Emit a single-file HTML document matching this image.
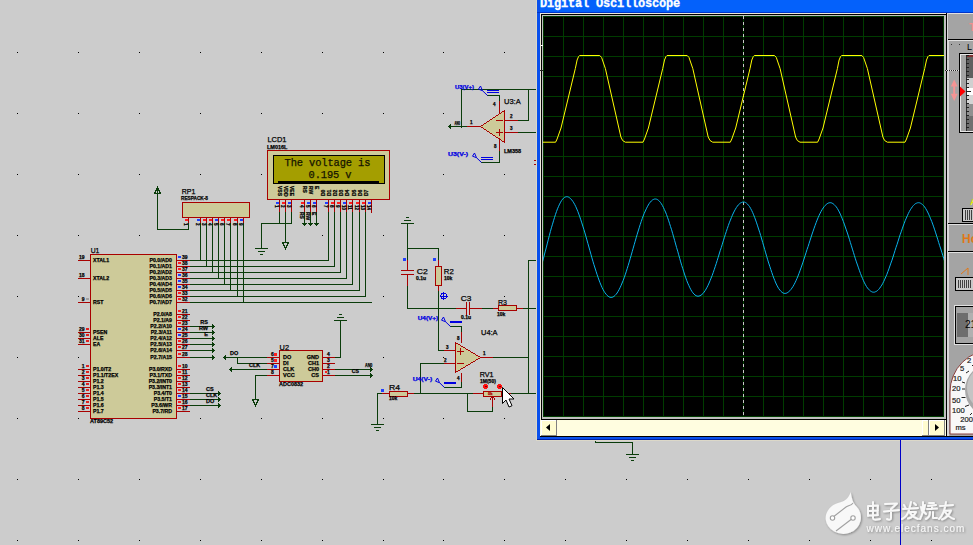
<!DOCTYPE html>
<html><head><meta charset="utf-8"><style>
html,body{margin:0;padding:0;background:#cccccc;width:973px;height:545px;overflow:hidden}
svg{display:block}
</style></head><body>
<svg width="973" height="545" viewBox="0 0 973 545">
<rect width="973" height="545" fill="#cccccc"/>
<g shape-rendering="crispEdges">
<rect x="17" y="52" width="1" height="1" fill="#000"/>
<rect x="17" y="113" width="1" height="1" fill="#000"/>
<rect x="17" y="174" width="1" height="1" fill="#000"/>
<rect x="17" y="235" width="1" height="1" fill="#000"/>
<rect x="17" y="296" width="1" height="1" fill="#000"/>
<rect x="17" y="357" width="1" height="1" fill="#000"/>
<rect x="17" y="418" width="1" height="1" fill="#000"/>
<rect x="17" y="479" width="1" height="1" fill="#000"/>
<rect x="17" y="540" width="1" height="1" fill="#000"/>
<rect x="78" y="52" width="1" height="1" fill="#000"/>
<rect x="78" y="113" width="1" height="1" fill="#000"/>
<rect x="78" y="174" width="1" height="1" fill="#000"/>
<rect x="78" y="235" width="1" height="1" fill="#000"/>
<rect x="78" y="296" width="1" height="1" fill="#000"/>
<rect x="78" y="357" width="1" height="1" fill="#000"/>
<rect x="78" y="418" width="1" height="1" fill="#000"/>
<rect x="78" y="479" width="1" height="1" fill="#000"/>
<rect x="78" y="540" width="1" height="1" fill="#000"/>
<rect x="139" y="52" width="1" height="1" fill="#000"/>
<rect x="139" y="113" width="1" height="1" fill="#000"/>
<rect x="139" y="174" width="1" height="1" fill="#000"/>
<rect x="139" y="235" width="1" height="1" fill="#000"/>
<rect x="139" y="296" width="1" height="1" fill="#000"/>
<rect x="139" y="357" width="1" height="1" fill="#000"/>
<rect x="139" y="418" width="1" height="1" fill="#000"/>
<rect x="139" y="479" width="1" height="1" fill="#000"/>
<rect x="139" y="540" width="1" height="1" fill="#000"/>
<rect x="200" y="52" width="1" height="1" fill="#000"/>
<rect x="200" y="113" width="1" height="1" fill="#000"/>
<rect x="200" y="174" width="1" height="1" fill="#000"/>
<rect x="200" y="235" width="1" height="1" fill="#000"/>
<rect x="200" y="296" width="1" height="1" fill="#000"/>
<rect x="200" y="357" width="1" height="1" fill="#000"/>
<rect x="200" y="418" width="1" height="1" fill="#000"/>
<rect x="200" y="479" width="1" height="1" fill="#000"/>
<rect x="200" y="540" width="1" height="1" fill="#000"/>
<rect x="261" y="52" width="1" height="1" fill="#000"/>
<rect x="261" y="113" width="1" height="1" fill="#000"/>
<rect x="261" y="174" width="1" height="1" fill="#000"/>
<rect x="261" y="235" width="1" height="1" fill="#000"/>
<rect x="261" y="296" width="1" height="1" fill="#000"/>
<rect x="261" y="357" width="1" height="1" fill="#000"/>
<rect x="261" y="418" width="1" height="1" fill="#000"/>
<rect x="261" y="479" width="1" height="1" fill="#000"/>
<rect x="261" y="540" width="1" height="1" fill="#000"/>
<rect x="322" y="52" width="1" height="1" fill="#000"/>
<rect x="322" y="113" width="1" height="1" fill="#000"/>
<rect x="322" y="174" width="1" height="1" fill="#000"/>
<rect x="322" y="235" width="1" height="1" fill="#000"/>
<rect x="322" y="296" width="1" height="1" fill="#000"/>
<rect x="322" y="357" width="1" height="1" fill="#000"/>
<rect x="322" y="418" width="1" height="1" fill="#000"/>
<rect x="322" y="479" width="1" height="1" fill="#000"/>
<rect x="322" y="540" width="1" height="1" fill="#000"/>
<rect x="383" y="52" width="1" height="1" fill="#000"/>
<rect x="383" y="113" width="1" height="1" fill="#000"/>
<rect x="383" y="174" width="1" height="1" fill="#000"/>
<rect x="383" y="235" width="1" height="1" fill="#000"/>
<rect x="383" y="296" width="1" height="1" fill="#000"/>
<rect x="383" y="357" width="1" height="1" fill="#000"/>
<rect x="383" y="418" width="1" height="1" fill="#000"/>
<rect x="383" y="479" width="1" height="1" fill="#000"/>
<rect x="383" y="540" width="1" height="1" fill="#000"/>
<rect x="443" y="52" width="1" height="1" fill="#000"/>
<rect x="443" y="113" width="1" height="1" fill="#000"/>
<rect x="443" y="174" width="1" height="1" fill="#000"/>
<rect x="443" y="235" width="1" height="1" fill="#000"/>
<rect x="443" y="296" width="1" height="1" fill="#000"/>
<rect x="443" y="357" width="1" height="1" fill="#000"/>
<rect x="443" y="418" width="1" height="1" fill="#000"/>
<rect x="443" y="479" width="1" height="1" fill="#000"/>
<rect x="443" y="540" width="1" height="1" fill="#000"/>
<rect x="504" y="52" width="1" height="1" fill="#000"/>
<rect x="504" y="113" width="1" height="1" fill="#000"/>
<rect x="504" y="174" width="1" height="1" fill="#000"/>
<rect x="504" y="235" width="1" height="1" fill="#000"/>
<rect x="504" y="296" width="1" height="1" fill="#000"/>
<rect x="504" y="357" width="1" height="1" fill="#000"/>
<rect x="504" y="418" width="1" height="1" fill="#000"/>
<rect x="504" y="479" width="1" height="1" fill="#000"/>
<rect x="504" y="540" width="1" height="1" fill="#000"/>
<rect x="565" y="52" width="1" height="1" fill="#000"/>
<rect x="565" y="113" width="1" height="1" fill="#000"/>
<rect x="565" y="174" width="1" height="1" fill="#000"/>
<rect x="565" y="235" width="1" height="1" fill="#000"/>
<rect x="565" y="296" width="1" height="1" fill="#000"/>
<rect x="565" y="357" width="1" height="1" fill="#000"/>
<rect x="565" y="418" width="1" height="1" fill="#000"/>
<rect x="565" y="479" width="1" height="1" fill="#000"/>
<rect x="565" y="540" width="1" height="1" fill="#000"/>
<rect x="626" y="52" width="1" height="1" fill="#000"/>
<rect x="626" y="113" width="1" height="1" fill="#000"/>
<rect x="626" y="174" width="1" height="1" fill="#000"/>
<rect x="626" y="235" width="1" height="1" fill="#000"/>
<rect x="626" y="296" width="1" height="1" fill="#000"/>
<rect x="626" y="357" width="1" height="1" fill="#000"/>
<rect x="626" y="418" width="1" height="1" fill="#000"/>
<rect x="626" y="479" width="1" height="1" fill="#000"/>
<rect x="626" y="540" width="1" height="1" fill="#000"/>
<rect x="687" y="52" width="1" height="1" fill="#000"/>
<rect x="687" y="113" width="1" height="1" fill="#000"/>
<rect x="687" y="174" width="1" height="1" fill="#000"/>
<rect x="687" y="235" width="1" height="1" fill="#000"/>
<rect x="687" y="296" width="1" height="1" fill="#000"/>
<rect x="687" y="357" width="1" height="1" fill="#000"/>
<rect x="687" y="418" width="1" height="1" fill="#000"/>
<rect x="687" y="479" width="1" height="1" fill="#000"/>
<rect x="687" y="540" width="1" height="1" fill="#000"/>
<rect x="748" y="52" width="1" height="1" fill="#000"/>
<rect x="748" y="113" width="1" height="1" fill="#000"/>
<rect x="748" y="174" width="1" height="1" fill="#000"/>
<rect x="748" y="235" width="1" height="1" fill="#000"/>
<rect x="748" y="296" width="1" height="1" fill="#000"/>
<rect x="748" y="357" width="1" height="1" fill="#000"/>
<rect x="748" y="418" width="1" height="1" fill="#000"/>
<rect x="748" y="479" width="1" height="1" fill="#000"/>
<rect x="748" y="540" width="1" height="1" fill="#000"/>
<rect x="809" y="52" width="1" height="1" fill="#000"/>
<rect x="809" y="113" width="1" height="1" fill="#000"/>
<rect x="809" y="174" width="1" height="1" fill="#000"/>
<rect x="809" y="235" width="1" height="1" fill="#000"/>
<rect x="809" y="296" width="1" height="1" fill="#000"/>
<rect x="809" y="357" width="1" height="1" fill="#000"/>
<rect x="809" y="418" width="1" height="1" fill="#000"/>
<rect x="809" y="479" width="1" height="1" fill="#000"/>
<rect x="809" y="540" width="1" height="1" fill="#000"/>
<rect x="870" y="52" width="1" height="1" fill="#000"/>
<rect x="870" y="113" width="1" height="1" fill="#000"/>
<rect x="870" y="174" width="1" height="1" fill="#000"/>
<rect x="870" y="235" width="1" height="1" fill="#000"/>
<rect x="870" y="296" width="1" height="1" fill="#000"/>
<rect x="870" y="357" width="1" height="1" fill="#000"/>
<rect x="870" y="418" width="1" height="1" fill="#000"/>
<rect x="870" y="479" width="1" height="1" fill="#000"/>
<rect x="870" y="540" width="1" height="1" fill="#000"/>
<rect x="931" y="52" width="1" height="1" fill="#000"/>
<rect x="931" y="113" width="1" height="1" fill="#000"/>
<rect x="931" y="174" width="1" height="1" fill="#000"/>
<rect x="931" y="235" width="1" height="1" fill="#000"/>
<rect x="931" y="296" width="1" height="1" fill="#000"/>
<rect x="931" y="357" width="1" height="1" fill="#000"/>
<rect x="931" y="418" width="1" height="1" fill="#000"/>
<rect x="931" y="479" width="1" height="1" fill="#000"/>
<rect x="931" y="540" width="1" height="1" fill="#000"/>
<rect x="90" y="254" width="87" height="165" fill="#a80000"/>
<rect x="91" y="255" width="85" height="163" fill="#cdca99"/>
<text x="90.7" y="252.5" font-family="Liberation Sans" font-size="7.8" fill="#000" stroke="#000" stroke-width="0.25" text-anchor="start" font-weight="normal" textLength="8.7" lengthAdjust="spacingAndGlyphs">U1</text>
<text x="90" y="422.5" font-family="Liberation Sans" font-size="5.5" fill="#000" stroke="#000" stroke-width="0.25" text-anchor="start" font-weight="bold" >AT89C52</text>
<rect x="78" y="260" width="12" height="1" fill="#a80000"/>
<text x="93" y="262" font-family="Liberation Sans" font-size="5.2" fill="#000" stroke="#000" stroke-width="0.25" text-anchor="start" font-weight="bold" >XTAL1</text>
<text x="84.5" y="259" font-family="Liberation Sans" font-size="5" fill="#000" stroke="#000" stroke-width="0.25" text-anchor="end" font-weight="bold" >19</text>
<rect x="86" y="256" width="3" height="2" fill="#cccccc"/>
<rect x="78" y="278" width="12" height="1" fill="#a80000"/>
<text x="93" y="280" font-family="Liberation Sans" font-size="5.2" fill="#000" stroke="#000" stroke-width="0.25" text-anchor="start" font-weight="bold" >XTAL2</text>
<text x="84.5" y="277" font-family="Liberation Sans" font-size="5" fill="#000" stroke="#000" stroke-width="0.25" text-anchor="end" font-weight="bold" >18</text>
<rect x="86" y="274" width="3" height="2" fill="#cccccc"/>
<rect x="78" y="302" width="12" height="1" fill="#a80000"/>
<text x="93" y="304" font-family="Liberation Sans" font-size="5.2" fill="#000" stroke="#000" stroke-width="0.25" text-anchor="start" font-weight="bold" >RST</text>
<text x="84.5" y="301" font-family="Liberation Sans" font-size="5" fill="#000" stroke="#000" stroke-width="0.25" text-anchor="end" font-weight="bold" >9</text>
<rect x="86" y="298" width="3" height="2" fill="#a0a0a0"/>
<rect x="78" y="332" width="12" height="1" fill="#a80000"/>
<text x="93" y="334" font-family="Liberation Sans" font-size="5.2" fill="#000" stroke="#000" stroke-width="0.25" text-anchor="start" font-weight="bold" >PSEN</text>
<text x="84.5" y="331" font-family="Liberation Sans" font-size="5" fill="#000" stroke="#000" stroke-width="0.25" text-anchor="end" font-weight="bold" >29</text>
<rect x="86" y="328" width="3" height="2" fill="#e02020"/>
<rect x="78" y="338" width="12" height="1" fill="#a80000"/>
<text x="93" y="340" font-family="Liberation Sans" font-size="5.2" fill="#000" stroke="#000" stroke-width="0.25" text-anchor="start" font-weight="bold" >ALE</text>
<text x="84.5" y="337" font-family="Liberation Sans" font-size="5" fill="#000" stroke="#000" stroke-width="0.25" text-anchor="end" font-weight="bold" >30</text>
<rect x="86" y="334" width="3" height="2" fill="#e02020"/>
<rect x="78" y="344" width="12" height="1" fill="#a80000"/>
<text x="93" y="346" font-family="Liberation Sans" font-size="5.2" fill="#000" stroke="#000" stroke-width="0.25" text-anchor="start" font-weight="bold" >EA</text>
<text x="84.5" y="343" font-family="Liberation Sans" font-size="5" fill="#000" stroke="#000" stroke-width="0.25" text-anchor="end" font-weight="bold" >31</text>
<rect x="86" y="340" width="3" height="2" fill="#e02020"/>
<rect x="78" y="369" width="12" height="1" fill="#a80000"/>
<text x="93" y="371" font-family="Liberation Sans" font-size="5.2" fill="#000" stroke="#000" stroke-width="0.25" text-anchor="start" font-weight="bold" >P1.0/T2</text>
<text x="84.5" y="368" font-family="Liberation Sans" font-size="5" fill="#000" stroke="#000" stroke-width="0.25" text-anchor="end" font-weight="bold" >1</text>
<rect x="86" y="365" width="3" height="2" fill="#e02020"/>
<rect x="78" y="375" width="12" height="1" fill="#a80000"/>
<text x="93" y="377" font-family="Liberation Sans" font-size="5.2" fill="#000" stroke="#000" stroke-width="0.25" text-anchor="start" font-weight="bold" >P1.1/T2EX</text>
<text x="84.5" y="374" font-family="Liberation Sans" font-size="5" fill="#000" stroke="#000" stroke-width="0.25" text-anchor="end" font-weight="bold" >2</text>
<rect x="86" y="371" width="3" height="2" fill="#e02020"/>
<rect x="78" y="381" width="12" height="1" fill="#a80000"/>
<text x="93" y="383" font-family="Liberation Sans" font-size="5.2" fill="#000" stroke="#000" stroke-width="0.25" text-anchor="start" font-weight="bold" >P1.2</text>
<text x="84.5" y="380" font-family="Liberation Sans" font-size="5" fill="#000" stroke="#000" stroke-width="0.25" text-anchor="end" font-weight="bold" >3</text>
<rect x="86" y="377" width="3" height="2" fill="#e02020"/>
<rect x="78" y="387" width="12" height="1" fill="#a80000"/>
<text x="93" y="389" font-family="Liberation Sans" font-size="5.2" fill="#000" stroke="#000" stroke-width="0.25" text-anchor="start" font-weight="bold" >P1.3</text>
<text x="84.5" y="386" font-family="Liberation Sans" font-size="5" fill="#000" stroke="#000" stroke-width="0.25" text-anchor="end" font-weight="bold" >4</text>
<rect x="86" y="383" width="3" height="2" fill="#e02020"/>
<rect x="78" y="393" width="12" height="1" fill="#a80000"/>
<text x="93" y="395" font-family="Liberation Sans" font-size="5.2" fill="#000" stroke="#000" stroke-width="0.25" text-anchor="start" font-weight="bold" >P1.4</text>
<text x="84.5" y="392" font-family="Liberation Sans" font-size="5" fill="#000" stroke="#000" stroke-width="0.25" text-anchor="end" font-weight="bold" >5</text>
<rect x="86" y="389" width="3" height="2" fill="#e02020"/>
<rect x="78" y="399" width="12" height="1" fill="#a80000"/>
<text x="93" y="401" font-family="Liberation Sans" font-size="5.2" fill="#000" stroke="#000" stroke-width="0.25" text-anchor="start" font-weight="bold" >P1.5</text>
<text x="84.5" y="398" font-family="Liberation Sans" font-size="5" fill="#000" stroke="#000" stroke-width="0.25" text-anchor="end" font-weight="bold" >6</text>
<rect x="86" y="395" width="3" height="2" fill="#e02020"/>
<rect x="78" y="405" width="12" height="1" fill="#a80000"/>
<text x="93" y="407" font-family="Liberation Sans" font-size="5.2" fill="#000" stroke="#000" stroke-width="0.25" text-anchor="start" font-weight="bold" >P1.6</text>
<text x="84.5" y="404" font-family="Liberation Sans" font-size="5" fill="#000" stroke="#000" stroke-width="0.25" text-anchor="end" font-weight="bold" >7</text>
<rect x="86" y="401" width="3" height="2" fill="#e02020"/>
<rect x="78" y="411" width="12" height="1" fill="#a80000"/>
<text x="93" y="413" font-family="Liberation Sans" font-size="5.2" fill="#000" stroke="#000" stroke-width="0.25" text-anchor="start" font-weight="bold" >P1.7</text>
<text x="84.5" y="410" font-family="Liberation Sans" font-size="5" fill="#000" stroke="#000" stroke-width="0.25" text-anchor="end" font-weight="bold" >8</text>
<rect x="86" y="407" width="3" height="2" fill="#e02020"/>
<rect x="177" y="260" width="13" height="1" fill="#a80000"/>
<text x="172" y="262" font-family="Liberation Sans" font-size="5.2" fill="#000" stroke="#000" stroke-width="0.25" text-anchor="end" font-weight="bold" >P0.0/AD0</text>
<text x="182" y="259" font-family="Liberation Sans" font-size="5" fill="#000" stroke="#000" stroke-width="0.25" text-anchor="start" font-weight="bold" >39</text>
<rect x="178" y="256" width="3" height="2" fill="#2040ff"/>
<rect x="177" y="266" width="13" height="1" fill="#a80000"/>
<text x="172" y="268" font-family="Liberation Sans" font-size="5.2" fill="#000" stroke="#000" stroke-width="0.25" text-anchor="end" font-weight="bold" >P0.1/AD1</text>
<text x="182" y="265" font-family="Liberation Sans" font-size="5" fill="#000" stroke="#000" stroke-width="0.25" text-anchor="start" font-weight="bold" >38</text>
<rect x="178" y="262" width="3" height="2" fill="#ff2020"/>
<rect x="177" y="272" width="13" height="1" fill="#a80000"/>
<text x="172" y="274" font-family="Liberation Sans" font-size="5.2" fill="#000" stroke="#000" stroke-width="0.25" text-anchor="end" font-weight="bold" >P0.2/AD2</text>
<text x="182" y="271" font-family="Liberation Sans" font-size="5" fill="#000" stroke="#000" stroke-width="0.25" text-anchor="start" font-weight="bold" >37</text>
<rect x="178" y="268" width="3" height="2" fill="#ff2020"/>
<rect x="177" y="278" width="13" height="1" fill="#a80000"/>
<text x="172" y="280" font-family="Liberation Sans" font-size="5.2" fill="#000" stroke="#000" stroke-width="0.25" text-anchor="end" font-weight="bold" >P0.3/AD3</text>
<text x="182" y="277" font-family="Liberation Sans" font-size="5" fill="#000" stroke="#000" stroke-width="0.25" text-anchor="start" font-weight="bold" >36</text>
<rect x="178" y="274" width="3" height="2" fill="#2040ff"/>
<rect x="177" y="284" width="13" height="1" fill="#a80000"/>
<text x="172" y="286" font-family="Liberation Sans" font-size="5.2" fill="#000" stroke="#000" stroke-width="0.25" text-anchor="end" font-weight="bold" >P0.4/AD4</text>
<text x="182" y="283" font-family="Liberation Sans" font-size="5" fill="#000" stroke="#000" stroke-width="0.25" text-anchor="start" font-weight="bold" >35</text>
<rect x="178" y="280" width="3" height="2" fill="#2040ff"/>
<rect x="177" y="290" width="13" height="1" fill="#a80000"/>
<text x="172" y="292" font-family="Liberation Sans" font-size="5.2" fill="#000" stroke="#000" stroke-width="0.25" text-anchor="end" font-weight="bold" >P0.5/AD5</text>
<text x="182" y="289" font-family="Liberation Sans" font-size="5" fill="#000" stroke="#000" stroke-width="0.25" text-anchor="start" font-weight="bold" >34</text>
<rect x="178" y="286" width="3" height="2" fill="#2040ff"/>
<rect x="177" y="296" width="13" height="1" fill="#a80000"/>
<text x="172" y="298" font-family="Liberation Sans" font-size="5.2" fill="#000" stroke="#000" stroke-width="0.25" text-anchor="end" font-weight="bold" >P0.6/AD6</text>
<text x="182" y="295" font-family="Liberation Sans" font-size="5" fill="#000" stroke="#000" stroke-width="0.25" text-anchor="start" font-weight="bold" >33</text>
<rect x="178" y="292" width="3" height="2" fill="#ff2020"/>
<rect x="177" y="302" width="13" height="1" fill="#a80000"/>
<text x="172" y="304" font-family="Liberation Sans" font-size="5.2" fill="#000" stroke="#000" stroke-width="0.25" text-anchor="end" font-weight="bold" >P0.7/AD7</text>
<text x="182" y="301" font-family="Liberation Sans" font-size="5" fill="#000" stroke="#000" stroke-width="0.25" text-anchor="start" font-weight="bold" >32</text>
<rect x="178" y="298" width="3" height="2" fill="#ff2020"/>
<rect x="177" y="314" width="13" height="1" fill="#a80000"/>
<text x="172" y="316" font-family="Liberation Sans" font-size="5.2" fill="#000" stroke="#000" stroke-width="0.25" text-anchor="end" font-weight="bold" >P2.0/A8</text>
<text x="182" y="313" font-family="Liberation Sans" font-size="5" fill="#000" stroke="#000" stroke-width="0.25" text-anchor="start" font-weight="bold" >21</text>
<rect x="178" y="310" width="3" height="2" fill="#ff2020"/>
<rect x="177" y="320" width="13" height="1" fill="#a80000"/>
<text x="172" y="322" font-family="Liberation Sans" font-size="5.2" fill="#000" stroke="#000" stroke-width="0.25" text-anchor="end" font-weight="bold" >P2.1/A9</text>
<text x="182" y="319" font-family="Liberation Sans" font-size="5" fill="#000" stroke="#000" stroke-width="0.25" text-anchor="start" font-weight="bold" >22</text>
<rect x="178" y="316" width="3" height="2" fill="#ff2020"/>
<rect x="177" y="326" width="13" height="1" fill="#a80000"/>
<text x="172" y="328" font-family="Liberation Sans" font-size="5.2" fill="#000" stroke="#000" stroke-width="0.25" text-anchor="end" font-weight="bold" >P2.2/A10</text>
<text x="182" y="325" font-family="Liberation Sans" font-size="5" fill="#000" stroke="#000" stroke-width="0.25" text-anchor="start" font-weight="bold" >23</text>
<rect x="178" y="322" width="3" height="2" fill="#ff2020"/>
<rect x="177" y="332" width="13" height="1" fill="#a80000"/>
<text x="172" y="334" font-family="Liberation Sans" font-size="5.2" fill="#000" stroke="#000" stroke-width="0.25" text-anchor="end" font-weight="bold" >P2.3/A11</text>
<text x="182" y="331" font-family="Liberation Sans" font-size="5" fill="#000" stroke="#000" stroke-width="0.25" text-anchor="start" font-weight="bold" >24</text>
<rect x="178" y="328" width="3" height="2" fill="#2040ff"/>
<rect x="177" y="338" width="13" height="1" fill="#a80000"/>
<text x="172" y="340" font-family="Liberation Sans" font-size="5.2" fill="#000" stroke="#000" stroke-width="0.25" text-anchor="end" font-weight="bold" >P2.4/A12</text>
<text x="182" y="337" font-family="Liberation Sans" font-size="5" fill="#000" stroke="#000" stroke-width="0.25" text-anchor="start" font-weight="bold" >25</text>
<rect x="178" y="334" width="3" height="2" fill="#2040ff"/>
<rect x="177" y="344" width="13" height="1" fill="#a80000"/>
<text x="172" y="346" font-family="Liberation Sans" font-size="5.2" fill="#000" stroke="#000" stroke-width="0.25" text-anchor="end" font-weight="bold" >P2.5/A13</text>
<text x="182" y="343" font-family="Liberation Sans" font-size="5" fill="#000" stroke="#000" stroke-width="0.25" text-anchor="start" font-weight="bold" >26</text>
<rect x="178" y="340" width="3" height="2" fill="#ff2020"/>
<rect x="177" y="350" width="13" height="1" fill="#a80000"/>
<text x="172" y="352" font-family="Liberation Sans" font-size="5.2" fill="#000" stroke="#000" stroke-width="0.25" text-anchor="end" font-weight="bold" >P2.6/A14</text>
<text x="182" y="349" font-family="Liberation Sans" font-size="5" fill="#000" stroke="#000" stroke-width="0.25" text-anchor="start" font-weight="bold" >27</text>
<rect x="178" y="346" width="3" height="2" fill="#ff2020"/>
<rect x="177" y="357" width="13" height="1" fill="#a80000"/>
<text x="172" y="359" font-family="Liberation Sans" font-size="5.2" fill="#000" stroke="#000" stroke-width="0.25" text-anchor="end" font-weight="bold" >P2.7/A15</text>
<text x="182" y="356" font-family="Liberation Sans" font-size="5" fill="#000" stroke="#000" stroke-width="0.25" text-anchor="start" font-weight="bold" >28</text>
<rect x="178" y="353" width="3" height="2" fill="#ff2020"/>
<rect x="177" y="369" width="13" height="1" fill="#a80000"/>
<text x="172" y="371" font-family="Liberation Sans" font-size="5.2" fill="#000" stroke="#000" stroke-width="0.25" text-anchor="end" font-weight="bold" >P3.0/RXD</text>
<text x="182" y="368" font-family="Liberation Sans" font-size="5" fill="#000" stroke="#000" stroke-width="0.25" text-anchor="start" font-weight="bold" >10</text>
<rect x="178" y="365" width="3" height="2" fill="#ff2020"/>
<rect x="177" y="375" width="13" height="1" fill="#a80000"/>
<text x="172" y="377" font-family="Liberation Sans" font-size="5.2" fill="#000" stroke="#000" stroke-width="0.25" text-anchor="end" font-weight="bold" >P3.1/TXD</text>
<text x="182" y="374" font-family="Liberation Sans" font-size="5" fill="#000" stroke="#000" stroke-width="0.25" text-anchor="start" font-weight="bold" >11</text>
<rect x="178" y="371" width="3" height="2" fill="#ff2020"/>
<rect x="177" y="381" width="13" height="1" fill="#a80000"/>
<text x="172" y="383" font-family="Liberation Sans" font-size="5.2" fill="#000" stroke="#000" stroke-width="0.25" text-anchor="end" font-weight="bold" >P3.2/INT0</text>
<text x="182" y="380" font-family="Liberation Sans" font-size="5" fill="#000" stroke="#000" stroke-width="0.25" text-anchor="start" font-weight="bold" >12</text>
<rect x="178" y="377" width="3" height="2" fill="#ff2020"/>
<rect x="177" y="387" width="13" height="1" fill="#a80000"/>
<text x="172" y="389" font-family="Liberation Sans" font-size="5.2" fill="#000" stroke="#000" stroke-width="0.25" text-anchor="end" font-weight="bold" >P3.3/INT1</text>
<text x="182" y="386" font-family="Liberation Sans" font-size="5" fill="#000" stroke="#000" stroke-width="0.25" text-anchor="start" font-weight="bold" >13</text>
<rect x="178" y="383" width="3" height="2" fill="#ff2020"/>
<rect x="177" y="393" width="13" height="1" fill="#a80000"/>
<text x="172" y="395" font-family="Liberation Sans" font-size="5.2" fill="#000" stroke="#000" stroke-width="0.25" text-anchor="end" font-weight="bold" >P3.4/T0</text>
<text x="182" y="392" font-family="Liberation Sans" font-size="5" fill="#000" stroke="#000" stroke-width="0.25" text-anchor="start" font-weight="bold" >14</text>
<rect x="178" y="389" width="3" height="2" fill="#ff2020"/>
<rect x="177" y="399" width="13" height="1" fill="#a80000"/>
<text x="172" y="401" font-family="Liberation Sans" font-size="5.2" fill="#000" stroke="#000" stroke-width="0.25" text-anchor="end" font-weight="bold" >P3.5/T1</text>
<text x="182" y="398" font-family="Liberation Sans" font-size="5" fill="#000" stroke="#000" stroke-width="0.25" text-anchor="start" font-weight="bold" >15</text>
<rect x="178" y="395" width="3" height="2" fill="#2040ff"/>
<rect x="177" y="405" width="13" height="1" fill="#a80000"/>
<text x="172" y="407" font-family="Liberation Sans" font-size="5.2" fill="#000" stroke="#000" stroke-width="0.25" text-anchor="end" font-weight="bold" >P3.6/WR</text>
<text x="182" y="404" font-family="Liberation Sans" font-size="5" fill="#000" stroke="#000" stroke-width="0.25" text-anchor="start" font-weight="bold" >16</text>
<rect x="178" y="401" width="3" height="2" fill="#ff2020"/>
<rect x="177" y="411" width="13" height="1" fill="#a80000"/>
<text x="172" y="413" font-family="Liberation Sans" font-size="5.2" fill="#000" stroke="#000" stroke-width="0.25" text-anchor="end" font-weight="bold" >P3.7/RD</text>
<text x="182" y="410" font-family="Liberation Sans" font-size="5" fill="#000" stroke="#000" stroke-width="0.25" text-anchor="start" font-weight="bold" >17</text>
<rect x="178" y="407" width="3" height="2" fill="#ff2020"/>
<rect x="190" y="260" width="139" height="1" fill="#0a3c0a"/>
<rect x="328" y="212" width="1" height="49" fill="#0a3c0a"/>
<rect x="200" y="223" width="1" height="38" fill="#0a3c0a"/>
<rect x="190" y="266" width="145" height="1" fill="#0a3c0a"/>
<rect x="334" y="212" width="1" height="55" fill="#0a3c0a"/>
<rect x="206" y="223" width="1" height="44" fill="#0a3c0a"/>
<rect x="190" y="272" width="151" height="1" fill="#0a3c0a"/>
<rect x="340" y="212" width="1" height="61" fill="#0a3c0a"/>
<rect x="212" y="223" width="1" height="50" fill="#0a3c0a"/>
<rect x="190" y="278" width="157" height="1" fill="#0a3c0a"/>
<rect x="346" y="212" width="1" height="67" fill="#0a3c0a"/>
<rect x="218" y="223" width="1" height="56" fill="#0a3c0a"/>
<rect x="190" y="284" width="163" height="1" fill="#0a3c0a"/>
<rect x="352" y="212" width="1" height="73" fill="#0a3c0a"/>
<rect x="224" y="223" width="1" height="62" fill="#0a3c0a"/>
<rect x="190" y="290" width="170" height="1" fill="#0a3c0a"/>
<rect x="359" y="212" width="1" height="79" fill="#0a3c0a"/>
<rect x="230" y="223" width="1" height="68" fill="#0a3c0a"/>
<rect x="190" y="296" width="176" height="1" fill="#0a3c0a"/>
<rect x="365" y="212" width="1" height="85" fill="#0a3c0a"/>
<rect x="237" y="223" width="1" height="74" fill="#0a3c0a"/>
<rect x="190" y="302" width="182" height="1" fill="#0a3c0a"/>
<rect x="243" y="223" width="1" height="80" fill="#0a3c0a"/>
<rect x="182" y="202" width="68" height="16" fill="#a80000"/>
<rect x="183" y="203" width="66" height="14" fill="#cdca99"/>
<text x="181.7" y="193.8" font-family="Liberation Sans" font-size="7.8" fill="#000" stroke="#000" stroke-width="0.25" text-anchor="start" font-weight="normal" textLength="13.6" lengthAdjust="spacingAndGlyphs">RP1</text>
<text x="181" y="199.5" font-family="Liberation Sans" font-size="5.5" fill="#000" stroke="#000" stroke-width="0.25" text-anchor="start" font-weight="bold" textLength="27" lengthAdjust="spacingAndGlyphs">RESPACK-8</text>
<rect x="188" y="218" width="1" height="5" fill="#a80000"/>
<rect x="185" y="219" width="3" height="2" fill="#ff2020"/>
<text x="184" y="223" font-family="Liberation Sans" font-size="4.5" fill="#000" stroke="#000" stroke-width="0.25" text-anchor="start" font-weight="bold" transform="rotate(90 184 223)">1</text>
<rect x="200" y="218" width="1" height="5" fill="#a80000"/>
<rect x="197" y="219" width="3" height="2" fill="#2040ff"/>
<text x="196" y="223" font-family="Liberation Sans" font-size="4.5" fill="#000" stroke="#000" stroke-width="0.25" text-anchor="start" font-weight="bold" transform="rotate(90 196 223)">2</text>
<rect x="206" y="218" width="1" height="5" fill="#a80000"/>
<rect x="203" y="219" width="3" height="2" fill="#ff2020"/>
<text x="202" y="223" font-family="Liberation Sans" font-size="4.5" fill="#000" stroke="#000" stroke-width="0.25" text-anchor="start" font-weight="bold" transform="rotate(90 202 223)">3</text>
<rect x="212" y="218" width="1" height="5" fill="#a80000"/>
<rect x="209" y="219" width="3" height="2" fill="#ff2020"/>
<text x="208" y="223" font-family="Liberation Sans" font-size="4.5" fill="#000" stroke="#000" stroke-width="0.25" text-anchor="start" font-weight="bold" transform="rotate(90 208 223)">4</text>
<rect x="218" y="218" width="1" height="5" fill="#a80000"/>
<rect x="215" y="219" width="3" height="2" fill="#2040ff"/>
<text x="214" y="223" font-family="Liberation Sans" font-size="4.5" fill="#000" stroke="#000" stroke-width="0.25" text-anchor="start" font-weight="bold" transform="rotate(90 214 223)">5</text>
<rect x="224" y="218" width="1" height="5" fill="#a80000"/>
<rect x="221" y="219" width="3" height="2" fill="#ff2020"/>
<text x="220" y="223" font-family="Liberation Sans" font-size="4.5" fill="#000" stroke="#000" stroke-width="0.25" text-anchor="start" font-weight="bold" transform="rotate(90 220 223)">6</text>
<rect x="230" y="218" width="1" height="5" fill="#a80000"/>
<rect x="227" y="219" width="3" height="2" fill="#ff2020"/>
<text x="226" y="223" font-family="Liberation Sans" font-size="4.5" fill="#000" stroke="#000" stroke-width="0.25" text-anchor="start" font-weight="bold" transform="rotate(90 226 223)">7</text>
<rect x="237" y="218" width="1" height="5" fill="#a80000"/>
<rect x="234" y="219" width="3" height="2" fill="#ff2020"/>
<text x="233" y="223" font-family="Liberation Sans" font-size="4.5" fill="#000" stroke="#000" stroke-width="0.25" text-anchor="start" font-weight="bold" transform="rotate(90 233 223)">8</text>
<rect x="243" y="218" width="1" height="5" fill="#a80000"/>
<rect x="240" y="219" width="3" height="2" fill="#2040ff"/>
<text x="239" y="223" font-family="Liberation Sans" font-size="4.5" fill="#000" stroke="#000" stroke-width="0.25" text-anchor="start" font-weight="bold" transform="rotate(90 239 223)">9</text>
<rect x="188" y="223" width="1" height="7" fill="#0a3c0a"/>
<rect x="157" y="229" width="32" height="1" fill="#0a3c0a"/>
<rect x="157" y="188" width="1" height="42" fill="#0a3c0a"/>
<path d="M154.5 193.5 L160.5 193.5 L157.5 187.5 Z" stroke="#0a3c0a" fill="none" stroke-width="1" />
<rect x="267" y="150" width="123" height="50" fill="#a80000"/>
<rect x="268" y="151" width="121" height="48" fill="#cdca99"/>
<text x="267.4" y="141.9" font-family="Liberation Sans" font-size="7.8" fill="#000" stroke="#000" stroke-width="0.25" text-anchor="start" font-weight="normal" textLength="19" lengthAdjust="spacingAndGlyphs">LCD1</text>
<text x="267" y="148.5" font-family="Liberation Sans" font-size="5.5" fill="#000" stroke="#000" stroke-width="0.25" text-anchor="start" font-weight="bold" >LM016L</text>
<rect x="273" y="155" width="112" height="29" fill="#000"/>
<rect x="274" y="156" width="110" height="27" fill="#a49e00"/>
<rect x="278" y="181" width="101" height="2" fill="#000"/>
<text x="284.5" y="166" font-family="Liberation Mono" font-size="10.4" fill="#141400" stroke="#141400" stroke-width="0.25" text-anchor="start" font-weight="normal" letter-spacing="-0.1" stroke-width="0.45">The voltage is</text>
<text x="308.5" y="178" font-family="Liberation Mono" font-size="10.4" fill="#141400" stroke="#141400" stroke-width="0.25" text-anchor="start" font-weight="normal" letter-spacing="-0.1" stroke-width="0.45">0.195 v</text>
<rect x="279" y="200" width="1" height="12" fill="#a80000"/>
<rect x="276" y="202" width="3" height="2" fill="#2040ff"/>
<text x="275" y="205" font-family="Liberation Sans" font-size="4.5" fill="#000" stroke="#000" stroke-width="0.25" text-anchor="start" font-weight="bold" transform="rotate(90 275 205)">1</text>
<rect x="285" y="200" width="1" height="12" fill="#a80000"/>
<rect x="282" y="202" width="3" height="2" fill="#ff2020"/>
<text x="281" y="205" font-family="Liberation Sans" font-size="4.5" fill="#000" stroke="#000" stroke-width="0.25" text-anchor="start" font-weight="bold" transform="rotate(90 281 205)">2</text>
<rect x="291" y="200" width="1" height="12" fill="#a80000"/>
<rect x="288" y="202" width="3" height="2" fill="#2040ff"/>
<text x="287" y="205" font-family="Liberation Sans" font-size="4.5" fill="#000" stroke="#000" stroke-width="0.25" text-anchor="start" font-weight="bold" transform="rotate(90 287 205)">3</text>
<rect x="304" y="200" width="1" height="12" fill="#a80000"/>
<rect x="301" y="202" width="3" height="2" fill="#ff2020"/>
<text x="300" y="205" font-family="Liberation Sans" font-size="4.5" fill="#000" stroke="#000" stroke-width="0.25" text-anchor="start" font-weight="bold" transform="rotate(90 300 205)">4</text>
<rect x="310" y="200" width="1" height="12" fill="#a80000"/>
<rect x="307" y="202" width="3" height="2" fill="#2040ff"/>
<text x="306" y="205" font-family="Liberation Sans" font-size="4.5" fill="#000" stroke="#000" stroke-width="0.25" text-anchor="start" font-weight="bold" transform="rotate(90 306 205)">5</text>
<rect x="316" y="200" width="1" height="12" fill="#a80000"/>
<rect x="313" y="202" width="3" height="2" fill="#2040ff"/>
<text x="312" y="205" font-family="Liberation Sans" font-size="4.5" fill="#000" stroke="#000" stroke-width="0.25" text-anchor="start" font-weight="bold" transform="rotate(90 312 205)">6</text>
<rect x="328" y="200" width="1" height="12" fill="#a80000"/>
<rect x="325" y="202" width="3" height="2" fill="#2040ff"/>
<text x="324" y="205" font-family="Liberation Sans" font-size="4.5" fill="#000" stroke="#000" stroke-width="0.25" text-anchor="start" font-weight="bold" transform="rotate(90 324 205)">7</text>
<rect x="334" y="200" width="1" height="12" fill="#a80000"/>
<rect x="331" y="202" width="3" height="2" fill="#ff2020"/>
<text x="330" y="205" font-family="Liberation Sans" font-size="4.5" fill="#000" stroke="#000" stroke-width="0.25" text-anchor="start" font-weight="bold" transform="rotate(90 330 205)">8</text>
<rect x="340" y="200" width="1" height="12" fill="#a80000"/>
<rect x="337" y="202" width="3" height="2" fill="#ff2020"/>
<text x="336" y="205" font-family="Liberation Sans" font-size="4.5" fill="#000" stroke="#000" stroke-width="0.25" text-anchor="start" font-weight="bold" transform="rotate(90 336 205)">9</text>
<rect x="346" y="200" width="1" height="12" fill="#a80000"/>
<rect x="343" y="202" width="3" height="2" fill="#2040ff"/>
<text x="342" y="205" font-family="Liberation Sans" font-size="4.5" fill="#000" stroke="#000" stroke-width="0.25" text-anchor="start" font-weight="bold" transform="rotate(90 342 205)">10</text>
<rect x="352" y="200" width="1" height="12" fill="#a80000"/>
<rect x="349" y="202" width="3" height="2" fill="#ff2020"/>
<text x="348" y="205" font-family="Liberation Sans" font-size="4.5" fill="#000" stroke="#000" stroke-width="0.25" text-anchor="start" font-weight="bold" transform="rotate(90 348 205)">11</text>
<rect x="359" y="200" width="1" height="12" fill="#a80000"/>
<rect x="356" y="202" width="3" height="2" fill="#ff2020"/>
<text x="355" y="205" font-family="Liberation Sans" font-size="4.5" fill="#000" stroke="#000" stroke-width="0.25" text-anchor="start" font-weight="bold" transform="rotate(90 355 205)">12</text>
<rect x="365" y="200" width="1" height="12" fill="#a80000"/>
<rect x="362" y="202" width="3" height="2" fill="#ff2020"/>
<text x="361" y="205" font-family="Liberation Sans" font-size="4.5" fill="#000" stroke="#000" stroke-width="0.25" text-anchor="start" font-weight="bold" transform="rotate(90 361 205)">13</text>
<rect x="371" y="200" width="1" height="13" fill="#a80000"/>
<rect x="368" y="202" width="3" height="2" fill="#2040ff"/>
<text x="367" y="205" font-family="Liberation Sans" font-size="4.5" fill="#000" stroke="#000" stroke-width="0.25" text-anchor="start" font-weight="bold" transform="rotate(90 367 205)">14</text>
<text x="278" y="186" font-family="Liberation Sans" font-size="5" fill="#000" stroke="#000" stroke-width="0.25" text-anchor="start" font-weight="bold" transform="rotate(90 278 186)">VSS</text>
<text x="284" y="186" font-family="Liberation Sans" font-size="5" fill="#000" stroke="#000" stroke-width="0.25" text-anchor="start" font-weight="bold" transform="rotate(90 284 186)">VDD</text>
<text x="290" y="186" font-family="Liberation Sans" font-size="5" fill="#000" stroke="#000" stroke-width="0.25" text-anchor="start" font-weight="bold" transform="rotate(90 290 186)">VEE</text>
<text x="303" y="186" font-family="Liberation Sans" font-size="5" fill="#000" stroke="#000" stroke-width="0.25" text-anchor="start" font-weight="bold" transform="rotate(90 303 186)">RS</text>
<text x="309" y="186" font-family="Liberation Sans" font-size="5" fill="#000" stroke="#000" stroke-width="0.25" text-anchor="start" font-weight="bold" transform="rotate(90 309 186)">RW</text>
<text x="315" y="186" font-family="Liberation Sans" font-size="5" fill="#000" stroke="#000" stroke-width="0.25" text-anchor="start" font-weight="bold" transform="rotate(90 315 186)">E</text>
<text x="325" y="196" font-family="Liberation Sans" font-size="5" fill="#000" stroke="#000" stroke-width="0.25" text-anchor="start" font-weight="bold" transform="rotate(-90 325 196)">D0</text>
<text x="331" y="196" font-family="Liberation Sans" font-size="5" fill="#000" stroke="#000" stroke-width="0.25" text-anchor="start" font-weight="bold" transform="rotate(-90 331 196)">D1</text>
<text x="337" y="196" font-family="Liberation Sans" font-size="5" fill="#000" stroke="#000" stroke-width="0.25" text-anchor="start" font-weight="bold" transform="rotate(-90 337 196)">D2</text>
<text x="343" y="196" font-family="Liberation Sans" font-size="5" fill="#000" stroke="#000" stroke-width="0.25" text-anchor="start" font-weight="bold" transform="rotate(-90 343 196)">D3</text>
<text x="349" y="196" font-family="Liberation Sans" font-size="5" fill="#000" stroke="#000" stroke-width="0.25" text-anchor="start" font-weight="bold" transform="rotate(-90 349 196)">D4</text>
<text x="356" y="196" font-family="Liberation Sans" font-size="5" fill="#000" stroke="#000" stroke-width="0.25" text-anchor="start" font-weight="bold" transform="rotate(-90 356 196)">D5</text>
<text x="362" y="196" font-family="Liberation Sans" font-size="5" fill="#000" stroke="#000" stroke-width="0.25" text-anchor="start" font-weight="bold" transform="rotate(-90 362 196)">D6</text>
<text x="368" y="196" font-family="Liberation Sans" font-size="5" fill="#000" stroke="#000" stroke-width="0.25" text-anchor="start" font-weight="bold" transform="rotate(-90 368 196)">D7</text>
<rect x="279" y="212" width="1" height="12" fill="#0a3c0a"/>
<rect x="285" y="212" width="1" height="12" fill="#0a3c0a"/>
<rect x="291" y="212" width="1" height="12" fill="#0a3c0a"/>
<rect x="261" y="223" width="31" height="1" fill="#0a3c0a"/>
<rect x="261" y="223" width="1" height="26" fill="#0a3c0a"/>
<rect x="255" y="248" width="13" height="1" fill="#0a3c0a"/>
<rect x="258" y="251" width="7" height="1" fill="#0a3c0a"/>
<rect x="260" y="254" width="3" height="1" fill="#0a3c0a"/>
<rect x="285" y="223" width="1" height="20" fill="#0a3c0a"/>
<path d="M282.5 242.5 L288.5 242.5 L285.5 248.5 Z" stroke="#0a3c0a" fill="none" stroke-width="1" />
<rect x="304" y="212" width="1" height="13" fill="#0a3c0a"/>
<rect x="302" y="223" width="5" height="1" fill="#0a3c0a"/>
<rect x="303" y="224" width="3" height="1" fill="#0a3c0a"/>
<rect x="304" y="225" width="1" height="1" fill="#0a3c0a"/>
<text x="300" y="212" font-family="Liberation Sans" font-size="5" fill="#000" stroke="#000" stroke-width="0.25" text-anchor="start" font-weight="bold" transform="rotate(90 300 212)">RS</text>
<rect x="310" y="212" width="1" height="13" fill="#0a3c0a"/>
<rect x="308" y="223" width="5" height="1" fill="#0a3c0a"/>
<rect x="309" y="224" width="3" height="1" fill="#0a3c0a"/>
<rect x="310" y="225" width="1" height="1" fill="#0a3c0a"/>
<text x="306" y="212" font-family="Liberation Sans" font-size="5" fill="#000" stroke="#000" stroke-width="0.25" text-anchor="start" font-weight="bold" transform="rotate(90 306 212)">RW</text>
<rect x="316" y="212" width="1" height="13" fill="#0a3c0a"/>
<rect x="314" y="223" width="5" height="1" fill="#0a3c0a"/>
<rect x="315" y="224" width="3" height="1" fill="#0a3c0a"/>
<rect x="316" y="225" width="1" height="1" fill="#0a3c0a"/>
<text x="312" y="212" font-family="Liberation Sans" font-size="5" fill="#000" stroke="#000" stroke-width="0.25" text-anchor="start" font-weight="bold" transform="rotate(90 312 212)">E</text>
<rect x="279" y="350" width="44" height="32" fill="#a80000"/>
<rect x="280" y="351" width="42" height="30" fill="#cdca99"/>
<text x="279.6" y="349.6" font-family="Liberation Sans" font-size="7.8" fill="#000" stroke="#000" stroke-width="0.25" text-anchor="start" font-weight="normal" textLength="9.4" lengthAdjust="spacingAndGlyphs">U2</text>
<text x="279" y="386" font-family="Liberation Sans" font-size="5.5" fill="#000" stroke="#000" stroke-width="0.25" text-anchor="start" font-weight="bold" >ADC0832</text>
<rect x="267" y="357" width="12" height="1" fill="#a80000"/>
<rect x="323" y="357" width="12" height="1" fill="#a80000"/>
<text x="283" y="359" font-family="Liberation Sans" font-size="5.5" fill="#000" stroke="#000" stroke-width="0.25" text-anchor="start" font-weight="bold" >DO</text>
<text x="319" y="359" font-family="Liberation Sans" font-size="5.5" fill="#000" stroke="#000" stroke-width="0.25" text-anchor="end" font-weight="bold" >GND</text>
<text x="271" y="356" font-family="Liberation Sans" font-size="5" fill="#000" stroke="#000" stroke-width="0.25" text-anchor="start" font-weight="bold" >6</text>
<text x="327" y="356" font-family="Liberation Sans" font-size="5" fill="#000" stroke="#000" stroke-width="0.25" text-anchor="start" font-weight="bold" >4</text>
<rect x="267" y="363" width="12" height="1" fill="#a80000"/>
<rect x="323" y="363" width="12" height="1" fill="#a80000"/>
<text x="283" y="365" font-family="Liberation Sans" font-size="5.5" fill="#000" stroke="#000" stroke-width="0.25" text-anchor="start" font-weight="bold" >DI</text>
<text x="319" y="365" font-family="Liberation Sans" font-size="5.5" fill="#000" stroke="#000" stroke-width="0.25" text-anchor="end" font-weight="bold" >CH1</text>
<text x="271" y="362" font-family="Liberation Sans" font-size="5" fill="#000" stroke="#000" stroke-width="0.25" text-anchor="start" font-weight="bold" >5</text>
<text x="327" y="362" font-family="Liberation Sans" font-size="5" fill="#000" stroke="#000" stroke-width="0.25" text-anchor="start" font-weight="bold" >3</text>
<rect x="267" y="369" width="12" height="1" fill="#a80000"/>
<rect x="323" y="369" width="12" height="1" fill="#a80000"/>
<text x="283" y="371" font-family="Liberation Sans" font-size="5.5" fill="#000" stroke="#000" stroke-width="0.25" text-anchor="start" font-weight="bold" >CLK</text>
<text x="319" y="371" font-family="Liberation Sans" font-size="5.5" fill="#000" stroke="#000" stroke-width="0.25" text-anchor="end" font-weight="bold" >CH0</text>
<text x="271" y="368" font-family="Liberation Sans" font-size="5" fill="#000" stroke="#000" stroke-width="0.25" text-anchor="start" font-weight="bold" >7</text>
<text x="327" y="368" font-family="Liberation Sans" font-size="5" fill="#000" stroke="#000" stroke-width="0.25" text-anchor="start" font-weight="bold" >2</text>
<rect x="267" y="375" width="12" height="1" fill="#a80000"/>
<rect x="323" y="375" width="12" height="1" fill="#a80000"/>
<text x="283" y="377" font-family="Liberation Sans" font-size="5.5" fill="#000" stroke="#000" stroke-width="0.25" text-anchor="start" font-weight="bold" >VCC</text>
<text x="319" y="377" font-family="Liberation Sans" font-size="5.5" fill="#000" stroke="#000" stroke-width="0.25" text-anchor="end" font-weight="bold" >CS</text>
<text x="271" y="374" font-family="Liberation Sans" font-size="5" fill="#000" stroke="#000" stroke-width="0.25" text-anchor="start" font-weight="bold" >8</text>
<text x="327" y="374" font-family="Liberation Sans" font-size="5" fill="#000" stroke="#000" stroke-width="0.25" text-anchor="start" font-weight="bold" >1</text>
<rect x="274" y="353" width="3" height="3" fill="#ff2020"/>
<rect x="274" y="359" width="3" height="3" fill="#ff2020"/>
<rect x="274" y="365" width="3" height="3" fill="#2040ff"/>
<rect x="325" y="371" width="2" height="2" fill="#ff2020"/>
<rect x="224" y="357" width="43" height="1" fill="#0a3c0a"/>
<rect x="225" y="355" width="1" height="5" fill="#0a3c0a"/>
<rect x="224" y="356" width="1" height="3" fill="#0a3c0a"/>
<rect x="223" y="357" width="1" height="1" fill="#0a3c0a"/>
<text x="230" y="355" font-family="Liberation Sans" font-size="5.5" fill="#000" stroke="#000" stroke-width="0.25" text-anchor="start" font-weight="bold" >DO</text>
<rect x="237" y="357" width="1" height="7" fill="#0a3c0a"/>
<rect x="237" y="363" width="30" height="1" fill="#0a3c0a"/>
<rect x="230" y="369" width="37" height="1" fill="#0a3c0a"/>
<rect x="231" y="367" width="1" height="5" fill="#0a3c0a"/>
<rect x="230" y="368" width="1" height="3" fill="#0a3c0a"/>
<rect x="229" y="369" width="1" height="1" fill="#0a3c0a"/>
<text x="249" y="367" font-family="Liberation Sans" font-size="5.5" fill="#000" stroke="#000" stroke-width="0.25" text-anchor="start" font-weight="bold" >CLK</text>
<rect x="255" y="375" width="12" height="1" fill="#0a3c0a"/>
<rect x="255" y="375" width="1" height="25" fill="#0a3c0a"/>
<path d="M252.5 399.5 L258.5 399.5 L255.5 405.5 Z" stroke="#0a3c0a" fill="none" stroke-width="1" />
<rect x="335" y="357" width="6" height="1" fill="#0a3c0a"/>
<rect x="340" y="320" width="1" height="38" fill="#0a3c0a"/>
<rect x="334" y="320" width="13" height="1" fill="#0a3c0a"/>
<rect x="337" y="317" width="7" height="1" fill="#0a3c0a"/>
<rect x="339" y="314" width="3" height="1" fill="#0a3c0a"/>
<rect x="335" y="369" width="36" height="1" fill="#0a3c0a"/>
<rect x="370" y="367" width="1" height="5" fill="#0a3c0a"/>
<rect x="371" y="368" width="1" height="3" fill="#0a3c0a"/>
<rect x="372" y="369" width="1" height="1" fill="#0a3c0a"/>
<text x="365" y="367" font-family="Liberation Sans" font-size="5" fill="#000" stroke="#000" stroke-width="0.25" text-anchor="start" font-weight="bold" textLength="7.4" lengthAdjust="spacingAndGlyphs">AN0</text>
<rect x="335" y="375" width="36" height="1" fill="#0a3c0a"/>
<rect x="370" y="373" width="1" height="5" fill="#0a3c0a"/>
<rect x="371" y="374" width="1" height="3" fill="#0a3c0a"/>
<rect x="372" y="375" width="1" height="1" fill="#0a3c0a"/>
<text x="351.8" y="373" font-family="Liberation Sans" font-size="5" fill="#000" stroke="#000" stroke-width="0.25" text-anchor="start" font-weight="bold" textLength="7.2" lengthAdjust="spacingAndGlyphs">CS</text>
<rect x="190" y="326" width="24" height="1" fill="#0a3c0a"/>
<rect x="212" y="324" width="1" height="5" fill="#0a3c0a"/>
<rect x="213" y="325" width="1" height="3" fill="#0a3c0a"/>
<rect x="214" y="326" width="1" height="1" fill="#0a3c0a"/>
<text x="208" y="324" font-family="Liberation Sans" font-size="5.5" fill="#000" stroke="#000" stroke-width="0.25" text-anchor="end" font-weight="bold" >RS</text>
<rect x="190" y="332" width="24" height="1" fill="#0a3c0a"/>
<rect x="212" y="330" width="1" height="5" fill="#0a3c0a"/>
<rect x="213" y="331" width="1" height="3" fill="#0a3c0a"/>
<rect x="214" y="332" width="1" height="1" fill="#0a3c0a"/>
<text x="208" y="330" font-family="Liberation Sans" font-size="5.5" fill="#000" stroke="#000" stroke-width="0.25" text-anchor="end" font-weight="bold" >RW</text>
<rect x="190" y="338" width="24" height="1" fill="#0a3c0a"/>
<rect x="212" y="336" width="1" height="5" fill="#0a3c0a"/>
<rect x="213" y="337" width="1" height="3" fill="#0a3c0a"/>
<rect x="214" y="338" width="1" height="1" fill="#0a3c0a"/>
<text x="208" y="336" font-family="Liberation Sans" font-size="5.5" fill="#000" stroke="#000" stroke-width="0.25" text-anchor="end" font-weight="bold" >E</text>
<rect x="190" y="344" width="24" height="1" fill="#0a3c0a"/>
<rect x="212" y="342" width="1" height="5" fill="#0a3c0a"/>
<rect x="213" y="343" width="1" height="3" fill="#0a3c0a"/>
<rect x="214" y="344" width="1" height="1" fill="#0a3c0a"/>
<rect x="190" y="350" width="24" height="1" fill="#0a3c0a"/>
<rect x="212" y="348" width="1" height="5" fill="#0a3c0a"/>
<rect x="213" y="349" width="1" height="3" fill="#0a3c0a"/>
<rect x="214" y="350" width="1" height="1" fill="#0a3c0a"/>
<rect x="190" y="357" width="24" height="1" fill="#0a3c0a"/>
<rect x="212" y="355" width="1" height="5" fill="#0a3c0a"/>
<rect x="213" y="356" width="1" height="3" fill="#0a3c0a"/>
<rect x="214" y="357" width="1" height="1" fill="#0a3c0a"/>
<rect x="190" y="393" width="30" height="1" fill="#0a3c0a"/>
<rect x="218" y="391" width="1" height="5" fill="#0a3c0a"/>
<rect x="219" y="392" width="1" height="3" fill="#0a3c0a"/>
<rect x="220" y="393" width="1" height="1" fill="#0a3c0a"/>
<text x="206" y="391" font-family="Liberation Sans" font-size="5.5" fill="#000" stroke="#000" stroke-width="0.25" text-anchor="start" font-weight="bold" >CS</text>
<rect x="190" y="399" width="30" height="1" fill="#0a3c0a"/>
<rect x="218" y="397" width="1" height="5" fill="#0a3c0a"/>
<rect x="219" y="398" width="1" height="3" fill="#0a3c0a"/>
<rect x="220" y="399" width="1" height="1" fill="#0a3c0a"/>
<text x="206" y="397" font-family="Liberation Sans" font-size="5.5" fill="#000" stroke="#000" stroke-width="0.25" text-anchor="start" font-weight="bold" >CLK</text>
<rect x="190" y="405" width="30" height="1" fill="#0a3c0a"/>
<rect x="218" y="403" width="1" height="5" fill="#0a3c0a"/>
<rect x="219" y="404" width="1" height="3" fill="#0a3c0a"/>
<rect x="220" y="405" width="1" height="1" fill="#0a3c0a"/>
<text x="206" y="403" font-family="Liberation Sans" font-size="5.5" fill="#000" stroke="#000" stroke-width="0.25" text-anchor="start" font-weight="bold" >DO</text>
<rect x="401" y="223" width="13" height="1" fill="#0a3c0a"/>
<rect x="404" y="220" width="7" height="1" fill="#0a3c0a"/>
<rect x="406" y="217" width="3" height="1" fill="#0a3c0a"/>
<rect x="407" y="224" width="1" height="36" fill="#0a3c0a"/>
<rect x="407" y="248" width="32" height="1" fill="#0a3c0a"/>
<rect x="438" y="248" width="1" height="12" fill="#0a3c0a"/>
<rect x="407" y="260" width="1" height="10" fill="#a80000"/>
<rect x="401" y="270" width="13" height="1" fill="#a80000"/>
<rect x="401" y="274" width="13" height="1" fill="#a80000"/>
<rect x="407" y="275" width="1" height="11" fill="#a80000"/>
<rect x="403" y="258" width="3" height="3" fill="#2040ff"/>
<rect x="407" y="286" width="1" height="23" fill="#0a3c0a"/>
<text x="416.7" y="274.3" font-family="Liberation Sans" font-size="7.8" fill="#000" stroke="#000" stroke-width="0.25" text-anchor="start" font-weight="normal" textLength="11" lengthAdjust="spacingAndGlyphs">C2</text>
<text x="416" y="280" font-family="Liberation Sans" font-size="5" fill="#000" stroke="#000" stroke-width="0.25" text-anchor="start" font-weight="bold" >0.1u</text>
<rect x="438" y="260" width="1" height="7" fill="#a80000"/>
<rect x="435" y="266" width="7" height="20" fill="#a80000"/>
<rect x="436" y="267" width="5" height="18" fill="#cdca99"/>
<rect x="438" y="286" width="1" height="5" fill="#a80000"/>
<rect x="433" y="258" width="3" height="3" fill="#2040ff"/>
<text x="443.8" y="274.3" font-family="Liberation Sans" font-size="7.8" fill="#000" stroke="#000" stroke-width="0.25" text-anchor="start" font-weight="normal" textLength="9.9" lengthAdjust="spacingAndGlyphs">R2</text>
<text x="444" y="280" font-family="Liberation Sans" font-size="5" fill="#000" stroke="#000" stroke-width="0.25" text-anchor="start" font-weight="bold" >10k</text>
<rect x="438" y="291" width="1" height="60" fill="#0a3c0a"/>
<path d="M443.8 293 A3 3 0 1 0 443.8 299 A3 3 0 1 0 443.8 293 M443.8 292 V300 M440 296 H448" stroke="#0000e0" fill="none" stroke-width="1" />
<rect x="407" y="308" width="49" height="1" fill="#0a3c0a"/>
<rect x="456" y="308" width="11" height="1" fill="#a80000"/>
<rect x="466" y="302" width="1" height="13" fill="#a80000"/>
<rect x="469" y="302" width="1" height="13" fill="#a80000"/>
<rect x="470" y="308" width="12" height="1" fill="#a80000"/>
<text x="460.7" y="300.7" font-family="Liberation Sans" font-size="7.8" fill="#000" stroke="#000" stroke-width="0.25" text-anchor="start" font-weight="normal" textLength="10.6" lengthAdjust="spacingAndGlyphs">C3</text>
<text x="461" y="319" font-family="Liberation Sans" font-size="5" fill="#000" stroke="#000" stroke-width="0.25" text-anchor="start" font-weight="bold" >0.1u</text>
<rect x="482" y="308" width="11" height="1" fill="#0a3c0a"/>
<rect x="493" y="308" width="6" height="1" fill="#a80000"/>
<rect x="498" y="305" width="19" height="6" fill="#a80000"/>
<rect x="499" y="306" width="17" height="4" fill="#cdca99"/>
<rect x="517" y="308" width="6" height="1" fill="#a80000"/>
<text x="498" y="304.6" font-family="Liberation Sans" font-size="7.8" fill="#000" stroke="#000" stroke-width="0.25" text-anchor="start" font-weight="normal" textLength="9" lengthAdjust="spacingAndGlyphs">R3</text>
<text x="497" y="315.5" font-family="Liberation Sans" font-size="5" fill="#000" stroke="#000" stroke-width="0.25" text-anchor="start" font-weight="bold" >10k</text>
<rect x="523" y="308" width="15" height="1" fill="#0a3c0a"/>
<rect x="528" y="260" width="1" height="134" fill="#0a3c0a"/>
<rect x="528" y="260" width="10" height="1" fill="#0a3c0a"/>
<path d="M504.5 110.5 L480.5 126.5 L504.5 142.5 Z" stroke="#a80000" fill="#cdca99" stroke-width="1" />
<rect x="496" y="120" width="7" height="1" fill="#a80000"/>
<rect x="496" y="132" width="7" height="1" fill="#a80000"/>
<rect x="499" y="129" width="1" height="7" fill="#a80000"/>
<rect x="467" y="126" width="14" height="1" fill="#a80000"/>
<rect x="449" y="126" width="18" height="1" fill="#0a3c0a"/>
<rect x="450" y="124" width="1" height="5" fill="#0a3c0a"/>
<rect x="449" y="125" width="1" height="3" fill="#0a3c0a"/>
<rect x="448" y="126" width="1" height="1" fill="#0a3c0a"/>
<rect x="461" y="126" width="1" height="2" fill="#0a3c0a"/>
<rect x="505" y="120" width="13" height="1" fill="#a80000"/>
<rect x="518" y="120" width="11" height="1" fill="#0a3c0a"/>
<rect x="528" y="89" width="1" height="32" fill="#0a3c0a"/>
<rect x="505" y="132" width="13" height="1" fill="#a80000"/>
<rect x="518" y="132" width="20" height="1" fill="#0a3c0a"/>
<rect x="461" y="89" width="77" height="1" fill="#0a3c0a"/>
<rect x="461" y="89" width="1" height="38" fill="#0a3c0a"/>
<rect x="499" y="100" width="1" height="14" fill="#a80000"/>
<rect x="499" y="95" width="1" height="6" fill="#0a3c0a"/>
<rect x="487" y="95" width="13" height="1" fill="#0a3c0a"/>
<rect x="499" y="138" width="1" height="13" fill="#a80000"/>
<rect x="499" y="151" width="1" height="12" fill="#0a3c0a"/>
<rect x="481" y="162" width="19" height="1" fill="#0a3c0a"/>
<text x="504" y="104" font-family="Liberation Sans" font-size="7.8" fill="#000" stroke="#000" stroke-width="0.25" text-anchor="start" font-weight="normal" textLength="16.7" lengthAdjust="spacingAndGlyphs">U3:A</text>
<text x="504" y="153" font-family="Liberation Sans" font-size="5.5" fill="#000" stroke="#000" stroke-width="0.25" text-anchor="start" font-weight="bold" >LM358</text>
<text x="455" y="88.5" font-family="Liberation Sans" font-size="5.5" fill="#0000e0" stroke="#0000e0" stroke-width="0.25" text-anchor="start" font-weight="bold" textLength="19" lengthAdjust="spacingAndGlyphs">U3(V+)</text>
<text x="448" y="155.5" font-family="Liberation Sans" font-size="5.5" fill="#0000e0" stroke="#0000e0" stroke-width="0.25" text-anchor="start" font-weight="bold" textLength="20" lengthAdjust="spacingAndGlyphs">U3(V-)</text>
<path d="M478.5 89.2 L480.5 86 L482.5 90.7 Z M482.5 90.7 L487.5 95.5" stroke="#0000e0" fill="none" stroke-width="1" shape-rendering="geometricPrecision"/>
<rect x="487" y="90" width="12" height="1" fill="#0000e0"/>
<rect x="487" y="92" width="12" height="1" fill="#0000e0"/>
<path d="M472.5 156.2 L474.5 153 L476.5 157.7 Z M476.5 157.7 L481.5 162.5" stroke="#0000e0" fill="none" stroke-width="1" shape-rendering="geometricPrecision"/>
<rect x="481" y="157" width="12" height="1" fill="#0000e0"/>
<rect x="481" y="159" width="12" height="1" fill="#0000e0"/>
<text x="493" y="106" font-family="Liberation Sans" font-size="4.5" fill="#000" stroke="#000" stroke-width="0.25" text-anchor="start" font-weight="bold" >4</text>
<text x="470" y="124" font-family="Liberation Sans" font-size="4.5" fill="#000" stroke="#000" stroke-width="0.25" text-anchor="start" font-weight="bold" >1</text>
<text x="510" y="118" font-family="Liberation Sans" font-size="4.5" fill="#000" stroke="#000" stroke-width="0.25" text-anchor="start" font-weight="bold" >2</text>
<text x="510" y="130" font-family="Liberation Sans" font-size="4.5" fill="#000" stroke="#000" stroke-width="0.25" text-anchor="start" font-weight="bold" >3</text>
<text x="494" y="148" font-family="Liberation Sans" font-size="4.5" fill="#000" stroke="#000" stroke-width="0.25" text-anchor="start" font-weight="bold" >8</text>
<text x="454.5" y="124.5" font-family="Liberation Sans" font-size="4.5" fill="#000" stroke="#000" stroke-width="0.25" text-anchor="start" font-weight="bold" textLength="5.5" lengthAdjust="spacingAndGlyphs">AN0</text>
<path d="M455.5 342.5 L480.5 357.5 L455.5 372.5 Z" stroke="#a80000" fill="#cdca99" stroke-width="1" />
<rect x="457" y="351" width="7" height="1" fill="#a80000"/>
<rect x="460" y="348" width="1" height="7" fill="#a80000"/>
<rect x="457" y="363" width="7" height="1" fill="#a80000"/>
<rect x="444" y="350" width="11" height="1" fill="#a80000"/>
<rect x="438" y="350" width="6" height="1" fill="#0a3c0a"/>
<rect x="444" y="363" width="11" height="1" fill="#a80000"/>
<rect x="420" y="363" width="24" height="1" fill="#0a3c0a"/>
<rect x="420" y="363" width="1" height="31" fill="#0a3c0a"/>
<rect x="481" y="357" width="12" height="1" fill="#a80000"/>
<rect x="493" y="357" width="36" height="1" fill="#0a3c0a"/>
<rect x="461" y="332" width="1" height="11" fill="#a80000"/>
<rect x="461" y="326" width="1" height="6" fill="#0a3c0a"/>
<rect x="450" y="326" width="12" height="1" fill="#0a3c0a"/>
<rect x="461" y="373" width="1" height="9" fill="#a80000"/>
<rect x="461" y="382" width="1" height="6" fill="#0a3c0a"/>
<rect x="444" y="387" width="18" height="1" fill="#0a3c0a"/>
<text x="481" y="335" font-family="Liberation Sans" font-size="7.8" fill="#000" stroke="#000" stroke-width="0.25" text-anchor="start" font-weight="normal" textLength="16.6" lengthAdjust="spacingAndGlyphs">U4:A</text>
<text x="417.7" y="319.6" font-family="Liberation Sans" font-size="5.5" fill="#0000e0" stroke="#0000e0" stroke-width="0.25" text-anchor="start" font-weight="bold" textLength="20.5" lengthAdjust="spacingAndGlyphs">U4(V+)</text>
<text x="412.7" y="380.8" font-family="Liberation Sans" font-size="5.5" fill="#0000e0" stroke="#0000e0" stroke-width="0.25" text-anchor="start" font-weight="bold" textLength="19.5" lengthAdjust="spacingAndGlyphs">U4(V-)</text>
<path d="M441.5 320.2 L443.5 317 L445.5 321.7 Z M445.5 321.7 L450.5 326.5" stroke="#0000e0" fill="none" stroke-width="1" shape-rendering="geometricPrecision"/>
<rect x="450" y="321" width="12" height="2" fill="#0000e0"/>
<path d="M435.5 381.2 L437.5 378 L439.5 382.7 Z M439.5 382.7 L444.5 387.5" stroke="#0000e0" fill="none" stroke-width="1" shape-rendering="geometricPrecision"/>
<rect x="444" y="382" width="12" height="2" fill="#0000e0"/>
<text x="446" y="349" font-family="Liberation Sans" font-size="4.5" fill="#000" stroke="#000" stroke-width="0.25" text-anchor="start" font-weight="bold" >3</text>
<text x="444" y="362" font-family="Liberation Sans" font-size="4.5" fill="#000" stroke="#000" stroke-width="0.25" text-anchor="start" font-weight="bold" >2</text>
<text x="483" y="355" font-family="Liberation Sans" font-size="4.5" fill="#000" stroke="#000" stroke-width="0.25" text-anchor="start" font-weight="bold" >1</text>
<text x="457" y="340" font-family="Liberation Sans" font-size="4.5" fill="#000" stroke="#000" stroke-width="0.25" text-anchor="start" font-weight="bold" >8</text>
<text x="457" y="380" font-family="Liberation Sans" font-size="4.5" fill="#000" stroke="#000" stroke-width="0.25" text-anchor="start" font-weight="bold" >4</text>
<rect x="377" y="393" width="5" height="1" fill="#0a3c0a"/>
<rect x="382" y="393" width="8" height="1" fill="#a80000"/>
<rect x="389" y="391" width="19" height="6" fill="#a80000"/>
<rect x="390" y="392" width="17" height="4" fill="#cdca99"/>
<rect x="408" y="393" width="6" height="1" fill="#a80000"/>
<rect x="414" y="393" width="59" height="1" fill="#0a3c0a"/>
<rect x="381" y="389" width="3" height="3" fill="#2040ff"/>
<text x="389" y="390" font-family="Liberation Sans" font-size="7.8" fill="#000" stroke="#000" stroke-width="0.25" text-anchor="start" font-weight="normal" textLength="11" lengthAdjust="spacingAndGlyphs">R4</text>
<text x="389" y="400" font-family="Liberation Sans" font-size="5" fill="#000" stroke="#000" stroke-width="0.25" text-anchor="start" font-weight="bold" >10k</text>
<rect x="377" y="393" width="1" height="32" fill="#0a3c0a"/>
<rect x="371" y="424" width="13" height="1" fill="#0a3c0a"/>
<rect x="374" y="427" width="7" height="1" fill="#0a3c0a"/>
<rect x="376" y="430" width="3" height="1" fill="#0a3c0a"/>
<rect x="473" y="393" width="10" height="1" fill="#a80000"/>
<rect x="483" y="391" width="19" height="6" fill="#a80000"/>
<rect x="484" y="392" width="17" height="4" fill="#cdca99"/>
<rect x="502" y="393" width="9" height="1" fill="#a80000"/>
<rect x="511" y="393" width="27" height="1" fill="#0a3c0a"/>
<circle cx="485.5" cy="386.5" r="2.4" fill="#ff1010"/><circle cx="499.5" cy="386.5" r="2.4" fill="#ff1010"/>
<rect x="485" y="386" width="2" height="1" fill="#800000"/>
<rect x="499" y="386" width="2" height="1" fill="#800000"/>
<text x="479.8" y="376.7" font-family="Liberation Sans" font-size="7.8" fill="#000" stroke="#000" stroke-width="0.25" text-anchor="start" font-weight="normal" textLength="13.8" lengthAdjust="spacingAndGlyphs">RV1</text>
<text x="480" y="382.5" font-family="Liberation Sans" font-size="5" fill="#000" stroke="#000" stroke-width="0.25" text-anchor="start" font-weight="bold" >1M(50)</text>
<rect x="492" y="397" width="1" height="10" fill="#a80000"/>
<rect x="492" y="407" width="1" height="5" fill="#0a3c0a"/>
<path d="M490 399.5 L492.5 396.5 L495 399.5" stroke="#a80000" fill="none" stroke-width="1" />
<rect x="467" y="393" width="1" height="19" fill="#0a3c0a"/>
<rect x="467" y="411" width="26" height="1" fill="#0a3c0a"/>
<text x="488" y="394.5" font-family="Liberation Sans" font-size="4" fill="#a80000" stroke="#a80000" stroke-width="0.25" text-anchor="start" font-weight="bold" >0k</text>
<rect x="534" y="160" width="4" height="1" fill="#a80000"/>
<rect x="534" y="164" width="4" height="1" fill="#a80000"/>
<rect x="536" y="173" width="1" height="3" fill="#2040ff"/>
<rect x="595" y="437" width="1" height="6" fill="#0a3c0a"/>
<rect x="595" y="442" width="38" height="1" fill="#0a3c0a"/>
<rect x="632" y="442" width="1" height="13" fill="#0a3c0a"/>
<rect x="626" y="454" width="13" height="1" fill="#0a3c0a"/>
<rect x="629" y="457" width="7" height="1" fill="#0a3c0a"/>
<rect x="631" y="460" width="3" height="1" fill="#0a3c0a"/>
<rect x="900" y="440" width="1" height="106" fill="#0000c8"/>
</g>
<g>
<rect x="536" y="0" width="437" height="441" fill="#dcd8c8" />
<rect x="537" y="0" width="436" height="440" fill="#0a50ec" />
<rect x="540" y="0" width="433" height="12" fill="#0461fb" />
<rect x="537" y="12" width="436" height="1" fill="#0034c8" />
<rect x="540" y="13" width="433" height="423" fill="#a4a4a4" />
<rect x="540" y="13" width="406" height="1" fill="#ece9d8" />
<rect x="540" y="13" width="1" height="407" fill="#ece9d8" />
<rect x="541" y="14" width="405" height="1" fill="#000" />
<rect x="541" y="14" width="1" height="405" fill="#000" />
<rect x="542" y="15" width="404" height="404" fill="#c0c0c0" />
<rect x="543" y="16" width="401" height="401" fill="#000" />
<rect x="946" y="13" width="1" height="423" fill="#000" />
<rect x="947" y="13" width="26" height="1" fill="#e0e0e0" />
<rect x="947" y="13" width="2" height="423" fill="#d8d8d8" />
<rect x="543" y="16" width="1" height="401" fill="#003c00"/>
<rect x="543" y="16" width="401" height="1" fill="#003c00"/>
<rect x="563" y="16" width="1" height="401" fill="#003c00"/>
<rect x="543" y="36" width="401" height="1" fill="#003c00"/>
<rect x="583" y="16" width="1" height="401" fill="#003c00"/>
<rect x="543" y="56" width="401" height="1" fill="#003c00"/>
<rect x="603" y="16" width="1" height="401" fill="#003c00"/>
<rect x="543" y="76" width="401" height="1" fill="#003c00"/>
<rect x="623" y="16" width="1" height="401" fill="#003c00"/>
<rect x="543" y="96" width="401" height="1" fill="#003c00"/>
<rect x="643" y="16" width="1" height="401" fill="#003c00"/>
<rect x="543" y="116" width="401" height="1" fill="#003c00"/>
<rect x="663" y="16" width="1" height="401" fill="#003c00"/>
<rect x="543" y="136" width="401" height="1" fill="#003c00"/>
<rect x="683" y="16" width="1" height="401" fill="#003c00"/>
<rect x="543" y="156" width="401" height="1" fill="#003c00"/>
<rect x="703" y="16" width="1" height="401" fill="#003c00"/>
<rect x="543" y="176" width="401" height="1" fill="#003c00"/>
<rect x="723" y="16" width="1" height="401" fill="#003c00"/>
<rect x="543" y="196" width="401" height="1" fill="#003c00"/>
<rect x="743" y="16" width="1" height="401" fill="#003c00"/>
<rect x="543" y="216" width="401" height="1" fill="#003c00"/>
<rect x="763" y="16" width="1" height="401" fill="#003c00"/>
<rect x="543" y="236" width="401" height="1" fill="#003c00"/>
<rect x="783" y="16" width="1" height="401" fill="#003c00"/>
<rect x="543" y="256" width="401" height="1" fill="#003c00"/>
<rect x="803" y="16" width="1" height="401" fill="#003c00"/>
<rect x="543" y="276" width="401" height="1" fill="#003c00"/>
<rect x="823" y="16" width="1" height="401" fill="#003c00"/>
<rect x="543" y="296" width="401" height="1" fill="#003c00"/>
<rect x="843" y="16" width="1" height="401" fill="#003c00"/>
<rect x="543" y="316" width="401" height="1" fill="#003c00"/>
<rect x="863" y="16" width="1" height="401" fill="#003c00"/>
<rect x="543" y="336" width="401" height="1" fill="#003c00"/>
<rect x="883" y="16" width="1" height="401" fill="#003c00"/>
<rect x="543" y="356" width="401" height="1" fill="#003c00"/>
<rect x="903" y="16" width="1" height="401" fill="#003c00"/>
<rect x="543" y="376" width="401" height="1" fill="#003c00"/>
<rect x="923" y="16" width="1" height="401" fill="#003c00"/>
<rect x="543" y="396" width="401" height="1" fill="#003c00"/>
<rect x="943" y="16" width="1" height="401" fill="#003c00"/>
<rect x="543" y="416" width="401" height="1" fill="#003c00"/>
<rect x="743" y="16" width="1" height="3" fill="#c8c8c8" />
<rect x="743" y="22" width="1" height="3" fill="#c8c8c8" />
<rect x="743" y="28" width="1" height="3" fill="#c8c8c8" />
<rect x="743" y="34" width="1" height="3" fill="#c8c8c8" />
<rect x="743" y="40" width="1" height="3" fill="#c8c8c8" />
<rect x="743" y="46" width="1" height="3" fill="#c8c8c8" />
<rect x="743" y="52" width="1" height="3" fill="#c8c8c8" />
<rect x="743" y="58" width="1" height="3" fill="#c8c8c8" />
<rect x="743" y="64" width="1" height="3" fill="#c8c8c8" />
<rect x="743" y="70" width="1" height="3" fill="#c8c8c8" />
<rect x="743" y="76" width="1" height="3" fill="#c8c8c8" />
<rect x="743" y="82" width="1" height="3" fill="#c8c8c8" />
<rect x="743" y="88" width="1" height="3" fill="#c8c8c8" />
<rect x="743" y="94" width="1" height="3" fill="#c8c8c8" />
<rect x="743" y="100" width="1" height="3" fill="#c8c8c8" />
<rect x="743" y="106" width="1" height="3" fill="#c8c8c8" />
<rect x="743" y="112" width="1" height="3" fill="#c8c8c8" />
<rect x="743" y="118" width="1" height="3" fill="#c8c8c8" />
<rect x="743" y="124" width="1" height="3" fill="#c8c8c8" />
<rect x="743" y="130" width="1" height="3" fill="#c8c8c8" />
<rect x="743" y="136" width="1" height="3" fill="#c8c8c8" />
<rect x="743" y="142" width="1" height="3" fill="#c8c8c8" />
<rect x="743" y="148" width="1" height="3" fill="#c8c8c8" />
<rect x="743" y="154" width="1" height="3" fill="#c8c8c8" />
<rect x="743" y="160" width="1" height="3" fill="#c8c8c8" />
<rect x="743" y="166" width="1" height="3" fill="#c8c8c8" />
<rect x="743" y="172" width="1" height="3" fill="#c8c8c8" />
<rect x="743" y="178" width="1" height="3" fill="#c8c8c8" />
<rect x="743" y="184" width="1" height="3" fill="#c8c8c8" />
<rect x="743" y="190" width="1" height="3" fill="#c8c8c8" />
<rect x="743" y="196" width="1" height="3" fill="#c8c8c8" />
<rect x="743" y="202" width="1" height="3" fill="#c8c8c8" />
<rect x="743" y="208" width="1" height="3" fill="#c8c8c8" />
<rect x="743" y="214" width="1" height="3" fill="#c8c8c8" />
<rect x="743" y="220" width="1" height="3" fill="#c8c8c8" />
<rect x="743" y="226" width="1" height="3" fill="#c8c8c8" />
<rect x="743" y="232" width="1" height="3" fill="#c8c8c8" />
<rect x="743" y="238" width="1" height="3" fill="#c8c8c8" />
<rect x="743" y="244" width="1" height="3" fill="#c8c8c8" />
<rect x="743" y="250" width="1" height="3" fill="#c8c8c8" />
<rect x="743" y="256" width="1" height="3" fill="#c8c8c8" />
<rect x="743" y="262" width="1" height="3" fill="#c8c8c8" />
<rect x="743" y="268" width="1" height="3" fill="#c8c8c8" />
<rect x="743" y="274" width="1" height="3" fill="#c8c8c8" />
<rect x="743" y="280" width="1" height="3" fill="#c8c8c8" />
<rect x="743" y="286" width="1" height="3" fill="#c8c8c8" />
<rect x="743" y="292" width="1" height="3" fill="#c8c8c8" />
<rect x="743" y="298" width="1" height="3" fill="#c8c8c8" />
<rect x="743" y="304" width="1" height="3" fill="#c8c8c8" />
<rect x="743" y="310" width="1" height="3" fill="#c8c8c8" />
<rect x="743" y="316" width="1" height="3" fill="#c8c8c8" />
<rect x="743" y="322" width="1" height="3" fill="#c8c8c8" />
<rect x="743" y="328" width="1" height="3" fill="#c8c8c8" />
<rect x="743" y="334" width="1" height="3" fill="#c8c8c8" />
<rect x="743" y="340" width="1" height="3" fill="#c8c8c8" />
<rect x="743" y="346" width="1" height="3" fill="#c8c8c8" />
<rect x="743" y="352" width="1" height="3" fill="#c8c8c8" />
<rect x="743" y="358" width="1" height="3" fill="#c8c8c8" />
<rect x="743" y="364" width="1" height="3" fill="#c8c8c8" />
<rect x="743" y="370" width="1" height="3" fill="#c8c8c8" />
<rect x="743" y="376" width="1" height="3" fill="#c8c8c8" />
<rect x="743" y="382" width="1" height="3" fill="#c8c8c8" />
<rect x="743" y="388" width="1" height="3" fill="#c8c8c8" />
<rect x="743" y="394" width="1" height="3" fill="#c8c8c8" />
<rect x="743" y="400" width="1" height="3" fill="#c8c8c8" />
<rect x="743" y="406" width="1" height="3" fill="#c8c8c8" />
<rect x="743" y="412" width="1" height="3" fill="#c8c8c8" />
<rect x="541" y="45" width="2" height="1" fill="#fff" />
<rect x="540" y="70" width="3" height="1" fill="#202020" />
<clipPath id="scr"><rect x="543" y="16" width="401" height="401"/></clipPath>
<g clip-path="url(#scr)"><path d="M543.0 142.2 L468.2 142.2 L469.8 139.0 L473.6 128.0 L487.9 68.6 L489.8 60.0 L491.2 56.5 L492.2 55.5 L512.5 55.5 L514.2 57.5 L518.0 68.6 L533.5 137.0 L535.2 140.5 L538.0 142.2 L555.6 142.2 L557.1 139.0 L561.0 128.0 L575.3 68.6 L577.1 60.0 L578.6 56.5 L579.6 55.5 L599.8 55.5 L601.6 57.5 L605.4 68.6 L620.9 137.0 L622.6 140.5 L625.3 142.2 L643.0 142.2 L644.5 139.0 L648.4 128.0 L662.7 68.6 L664.5 60.0 L666.0 56.5 L667.0 55.5 L687.2 55.5 L689.0 57.5 L692.8 68.6 L708.2 137.0 L710.0 140.5 L712.7 142.2 L730.3 142.2 L731.8 139.0 L735.7 128.0 L750.0 68.6 L751.8 60.0 L753.3 56.5 L754.3 55.5 L774.5 55.5 L776.3 57.5 L780.1 68.6 L795.6 137.0 L797.3 140.5 L800.0 142.2 L817.6 142.2 L819.1 139.0 L823.0 128.0 L837.4 68.6 L839.1 60.0 L840.6 56.5 L841.6 55.5 L861.9 55.5 L863.6 57.5 L867.4 68.6 L882.9 137.0 L884.6 140.5 L887.4 142.2 L905.0 142.2 L906.5 139.0 L910.4 128.0 L924.7 68.6 L926.5 60.0 L928.0 56.5 L929.0 55.5 L949.2 55.5 L951.0 57.5 L954.8 68.6 L970.3 137.0 L972.0 140.5 L974.7 142.2 L992.4 142.2 L993.9 139.0 L997.8 128.0 L1012.1 68.6 L1013.9 60.0 L1015.4 56.5 L1016.4 55.5 L1036.5 55.5 L1038.3 57.5 L1042.2 68.6 L1057.7 137.0 L1059.3 140.5 L1062.0 142.2 L1000.0 142.2" stroke="#ffff00" stroke-width="1" fill="none"/>
<path d="M482.0 201.0 L483.0 201.1 L484.0 201.5 L485.0 202.1 L486.0 203.0 L487.0 204.0 L488.0 205.4 L489.0 206.9 L490.0 208.7 L491.0 210.6 L492.0 212.8 L493.0 215.1 L494.0 217.7 L495.0 220.3 L496.0 223.2 L497.0 226.1 L498.0 229.2 L499.0 232.4 L500.0 235.7 L501.0 239.0 L502.0 242.4 L503.0 245.8 L504.0 249.2 L505.0 252.7 L506.0 256.1 L507.0 259.5 L508.0 262.8 L509.0 266.1 L510.0 269.3 L511.0 272.4 L512.0 275.3 L513.0 278.2 L514.0 280.8 L515.0 283.4 L516.0 285.7 L517.0 287.9 L518.0 289.8 L519.0 291.6 L520.0 293.1 L521.0 294.5 L522.0 295.5 L523.0 296.4 L524.0 297.0 L525.0 297.4 L526.0 297.5 L527.0 297.3 L528.0 296.9 L529.1 296.1 L530.1 295.0 L531.1 293.7 L532.1 292.0 L533.1 290.1 L534.1 287.9 L535.2 285.4 L536.2 282.7 L537.2 279.8 L538.2 276.7 L539.2 273.4 L540.2 270.0 L541.3 266.4 L542.3 262.7 L543.3 258.9 L544.3 255.0 L545.3 251.1 L546.4 247.1 L547.4 243.1 L548.4 239.2 L549.4 235.3 L550.4 231.5 L551.4 227.8 L552.5 224.2 L553.5 220.8 L554.5 217.5 L555.5 214.4 L556.5 211.5 L557.5 208.8 L558.6 206.3 L559.6 204.1 L560.6 202.2 L561.6 200.5 L562.6 199.2 L563.6 198.1 L564.7 197.3 L565.7 196.9 L566.7 196.7 L567.7 196.8 L568.7 197.2 L569.7 197.9 L570.7 198.7 L571.7 199.9 L572.8 201.3 L573.8 202.9 L574.8 204.7 L575.8 206.7 L576.8 209.0 L577.8 211.4 L578.8 214.1 L579.8 216.9 L580.8 219.8 L581.8 222.9 L582.8 226.1 L583.9 229.5 L584.9 232.9 L585.9 236.3 L586.9 239.9 L587.9 243.5 L588.9 247.0 L589.9 250.6 L590.9 254.2 L591.9 257.8 L592.9 261.2 L593.9 264.6 L595.0 268.0 L596.0 271.2 L597.0 274.3 L598.0 277.2 L599.0 280.0 L600.0 282.7 L601.0 285.1 L602.0 287.4 L603.0 289.4 L604.0 291.2 L605.0 292.8 L606.1 294.2 L607.1 295.4 L608.1 296.2 L609.1 296.9 L610.1 297.3 L611.1 297.4 L612.1 297.3 L613.1 296.9 L614.1 296.3 L615.1 295.4 L616.1 294.3 L617.1 293.0 L618.1 291.4 L619.1 289.6 L620.1 287.6 L621.1 285.4 L622.1 283.0 L623.2 280.4 L624.2 277.7 L625.2 274.8 L626.2 271.8 L627.2 268.6 L628.2 265.4 L629.2 262.1 L630.2 258.7 L631.2 255.2 L632.2 251.7 L633.2 248.2 L634.2 244.7 L635.2 241.2 L636.2 237.7 L637.2 234.3 L638.2 231.0 L639.2 227.8 L640.2 224.6 L641.2 221.6 L642.2 218.7 L643.2 216.0 L644.2 213.4 L645.3 211.0 L646.3 208.8 L647.3 206.8 L648.3 205.0 L649.3 203.4 L650.3 202.1 L651.3 201.0 L652.3 200.1 L653.3 199.5 L654.3 199.1 L655.3 199.0 L656.3 199.1 L657.3 199.5 L658.3 200.2 L659.4 201.2 L660.4 202.4 L661.4 203.8 L662.4 205.5 L663.4 207.4 L664.4 209.6 L665.5 212.0 L666.5 214.5 L667.5 217.3 L668.5 220.2 L669.5 223.3 L670.5 226.5 L671.6 229.8 L672.6 233.3 L673.6 236.8 L674.6 240.4 L675.6 244.0 L676.6 247.6 L677.7 251.2 L678.7 254.8 L679.7 258.4 L680.7 261.9 L681.7 265.4 L682.8 268.7 L683.8 271.9 L684.8 275.0 L685.8 277.9 L686.8 280.7 L687.8 283.2 L688.9 285.6 L689.9 287.8 L690.9 289.7 L691.9 291.4 L692.9 292.8 L693.9 294.0 L695.0 295.0 L696.0 295.7 L697.0 296.1 L698.0 296.2 L699.0 296.1 L700.0 295.7 L701.0 295.2 L702.0 294.4 L703.1 293.4 L704.1 292.1 L705.1 290.7 L706.1 289.0 L707.1 287.2 L708.1 285.2 L709.1 283.0 L710.1 280.6 L711.1 278.1 L712.2 275.4 L713.2 272.6 L714.2 269.7 L715.2 266.7 L716.2 263.7 L717.2 260.5 L718.2 257.3 L719.2 254.0 L720.2 250.7 L721.3 247.5 L722.3 244.2 L723.3 240.9 L724.3 237.7 L725.3 234.5 L726.3 231.5 L727.3 228.5 L728.3 225.6 L729.3 222.8 L730.4 220.1 L731.4 217.6 L732.4 215.2 L733.4 213.0 L734.4 211.0 L735.4 209.2 L736.4 207.5 L737.4 206.1 L738.4 204.8 L739.5 203.8 L740.5 203.0 L741.5 202.5 L742.5 202.1 L743.5 202.0 L744.5 202.1 L745.5 202.5 L746.5 203.2 L747.5 204.1 L748.5 205.3 L749.6 206.7 L750.6 208.4 L751.6 210.3 L752.6 212.4 L753.6 214.8 L754.6 217.3 L755.6 220.0 L756.6 222.9 L757.6 225.9 L758.6 229.0 L759.7 232.3 L760.7 235.6 L761.7 239.0 L762.7 242.5 L763.7 245.9 L764.7 249.5 L765.7 252.9 L766.7 256.4 L767.7 259.8 L768.7 263.1 L769.8 266.4 L770.8 269.5 L771.8 272.5 L772.8 275.4 L773.8 278.1 L774.8 280.6 L775.8 283.0 L776.8 285.1 L777.8 287.0 L778.8 288.7 L779.9 290.1 L780.9 291.3 L781.9 292.2 L782.9 292.9 L783.9 293.3 L784.9 293.4 L785.9 293.3 L786.9 293.0 L787.9 292.4 L788.9 291.6 L789.9 290.7 L790.9 289.5 L791.9 288.1 L793.0 286.5 L794.0 284.7 L795.0 282.8 L796.0 280.7 L797.0 278.4 L798.0 276.0 L799.0 273.4 L800.0 270.7 L801.0 267.9 L802.0 265.0 L803.0 262.1 L804.0 259.0 L805.0 255.9 L806.0 252.8 L807.0 249.6 L808.1 246.5 L809.1 243.3 L810.1 240.2 L811.1 237.1 L812.1 234.0 L813.1 231.1 L814.1 228.2 L815.1 225.4 L816.1 222.7 L817.1 220.1 L818.1 217.7 L819.1 215.4 L820.1 213.3 L821.1 211.4 L822.1 209.6 L823.2 208.0 L824.2 206.6 L825.2 205.4 L826.2 204.5 L827.2 203.7 L828.2 203.1 L829.2 202.8 L830.2 202.7 L831.2 202.8 L832.2 203.2 L833.2 203.8 L834.2 204.6 L835.2 205.7 L836.3 206.9 L837.3 208.4 L838.3 210.1 L839.3 212.0 L840.3 214.1 L841.3 216.4 L842.3 218.8 L843.3 221.4 L844.3 224.1 L845.3 227.0 L846.3 229.9 L847.4 233.0 L848.4 236.1 L849.4 239.3 L850.4 242.6 L851.4 245.8 L852.4 249.1 L853.4 252.3 L854.4 255.6 L855.4 258.8 L856.4 261.9 L857.5 265.0 L858.5 267.9 L859.5 270.8 L860.5 273.5 L861.5 276.1 L862.5 278.5 L863.5 280.8 L864.5 282.9 L865.5 284.8 L866.5 286.5 L867.5 288.0 L868.6 289.2 L869.6 290.3 L870.6 291.1 L871.6 291.7 L872.6 292.1 L873.6 292.2 L874.6 292.1 L875.6 291.7 L876.7 291.2 L877.7 290.4 L878.7 289.4 L879.7 288.2 L880.7 286.7 L881.8 285.1 L882.8 283.3 L883.8 281.3 L884.8 279.1 L885.8 276.8 L886.9 274.3 L887.9 271.6 L888.9 268.9 L889.9 266.0 L890.9 263.1 L892.0 260.1 L893.0 257.0 L894.0 253.8 L895.0 250.6 L896.0 247.4 L897.1 244.3 L898.1 241.1 L899.1 237.9 L900.1 234.8 L901.2 231.8 L902.2 228.9 L903.2 226.0 L904.2 223.3 L905.2 220.6 L906.3 218.1 L907.3 215.8 L908.3 213.6 L909.3 211.6 L910.3 209.8 L911.4 208.2 L912.4 206.7 L913.4 205.5 L914.4 204.5 L915.4 203.7 L916.5 203.2 L917.5 202.8 L918.5 202.7 L919.5 202.8 L920.5 203.2 L921.5 203.8 L922.5 204.6 L923.6 205.6 L924.6 206.9 L925.6 208.4 L926.6 210.1 L927.6 212.0 L928.6 214.1 L929.6 216.4 L930.6 218.8 L931.7 221.4 L932.7 224.1 L933.7 226.9 L934.7 229.9 L935.7 232.9 L936.7 236.1 L937.7 239.2 L938.7 242.5 L939.7 245.7 L940.8 249.0 L941.8 252.2 L942.8 255.5 L943.8 258.6 L944.8 261.8 L945.8 264.8 L946.8 267.8 L947.8 270.6 L948.8 273.3 L949.9 275.9 L950.9 278.3 L951.9 280.6 L952.9 282.7 L953.9 284.6 L954.9 286.3 L955.9 287.8 L956.9 289.1 L958.0 290.1 L959.0 290.9 L960.0 291.5 L961.0 291.9 L962.0 292.0 L963.0 291.9 L964.0 291.5 L965.0 291.0 L966.0 290.2 L967.0 289.2 L968.0 288.0 L969.0 286.5 L970.0 284.9 L971.0 283.1 L972.0 281.1 L973.0 278.9 L974.0 276.6 L975.0 274.1 L976.0 271.5 L977.0 268.7 L978.0 265.9 L979.0 263.0 L980.0 259.9 L981.0 256.8 L982.0 253.7 L983.0 250.5 L984.0 247.3 L985.0 244.2 L986.0 241.0 L987.0 237.9 L988.0 234.8 L989.0 231.7 L990.0 228.8 L991.0 226.0 L992.0 223.2 L993.0 220.6 L994.0 218.1 L995.0 215.8 L996.0 213.6 L997.0 211.6 L998.0 209.8 L999.0 208.2 L1000.0 206.7 L1001.0 205.5 L1002.0 204.5 L1003.0 203.7 L1004.0 203.2 L1005.0 202.8 L1006.0 202.7" stroke="#08b4ec" stroke-width="1" fill="none"/></g>
<rect x="541" y="419" width="405" height="1" fill="#000" />
<rect x="540" y="420" width="406" height="16" fill="#fffde0" />
<rect x="541" y="420" width="16" height="16" fill="#808080" />
<rect x="541" y="420" width="15" height="15" fill="#ffffff" />
<rect x="542" y="421" width="14" height="14" fill="#fffcd0" />
<path d="M546 427.5 L550 424 L550 431 Z" fill="#000"/>
<rect x="922" y="420" width="7" height="16" fill="#808080" />
<rect x="922" y="420" width="6" height="15" fill="#ffffff" />
<rect x="923" y="421" width="5" height="14" fill="#fffcd0" />
<rect x="929" y="420" width="16" height="16" fill="#808080" />
<rect x="929" y="420" width="15" height="15" fill="#ffffff" />
<rect x="930" y="421" width="14" height="14" fill="#fffcd0" />
<path d="M939 427.5 L935 424 L935 431 Z" fill="#000"/>
<text x="540" y="7.3" font-family="Liberation Mono" font-size="12" fill="#fff" text-anchor="start" font-weight="bold" letter-spacing="-0.2" stroke="#fff" stroke-width="0.3">Digital Oscilloscope</text>
<rect x="948" y="14" width="25" height="25" fill="#a4a4a4" />
<rect x="948" y="39" width="25" height="1" fill="#000" />
<rect x="948" y="40" width="25" height="1" fill="#e0e0e0" />
<text x="969" y="31" font-family="Liberation Sans" font-size="11" fill="#f09090" text-anchor="start" font-weight="bold" >T</text>
<rect x="951" y="44" width="1" height="1" fill="#333" />
<rect x="959" y="44" width="1" height="1" fill="#333" />
<text x="967" y="50" font-family="Liberation Sans" font-size="9" fill="#000" text-anchor="start" font-weight="normal" >L</text>
<rect x="945" y="70" width="1" height="1" fill="#202020" />
<rect x="947" y="70" width="1" height="1" fill="#202020" />
<rect x="949" y="70" width="1" height="1" fill="#202020" />
<rect x="951" y="70" width="1" height="1" fill="#202020" />
<rect x="953" y="70" width="1" height="1" fill="#202020" />
<rect x="955" y="70" width="1" height="1" fill="#202020" />
<rect x="957" y="70" width="1" height="1" fill="#202020" />
<rect x="946" y="70" width="1" height="1" fill="#e8e8e8" />
<rect x="948" y="70" width="1" height="1" fill="#e8e8e8" />
<rect x="950" y="70" width="1" height="1" fill="#e8e8e8" />
<rect x="952" y="70" width="1" height="1" fill="#e8e8e8" />
<rect x="954" y="70" width="1" height="1" fill="#e8e8e8" />
<rect x="956" y="70" width="1" height="1" fill="#e8e8e8" />
<rect x="958" y="70" width="1" height="1" fill="#e8e8e8" />
<rect x="959" y="53" width="14" height="80" fill="#000" />
<rect x="960" y="54" width="13" height="78" fill="#e8e8e8" />
<rect x="961" y="55" width="12" height="76" fill="#a4a4a4" />
<rect x="966" y="55" width="7" height="76" fill="#6a6a6a" />
<rect x="966" y="55" width="7" height="2" fill="#803030" />
<rect x="967" y="57" width="6" height="21" fill="#606060" />
<rect x="967" y="78" width="6" height="10" fill="#d0d0d0" />
<rect x="967" y="88" width="6" height="7" fill="#ffffff" />
<rect x="967" y="95" width="6" height="9" fill="#d4d4d4" />
<rect x="967" y="104" width="6" height="12" fill="#909090" />
<rect x="967" y="116" width="6" height="15" fill="#707070" />
<rect x="966" y="55" width="1" height="76" fill="#303030" />
<rect x="966" y="55" width="3" height="1" fill="#202020" />
<rect x="966" y="59" width="3" height="1" fill="#202020" />
<rect x="966" y="63" width="3" height="1" fill="#202020" />
<rect x="966" y="67" width="3" height="1" fill="#202020" />
<rect x="966" y="71" width="3" height="1" fill="#202020" />
<rect x="966" y="75" width="3" height="1" fill="#202020" />
<rect x="966" y="79" width="3" height="1" fill="#202020" />
<rect x="966" y="83" width="3" height="1" fill="#202020" />
<rect x="966" y="87" width="3" height="1" fill="#202020" />
<rect x="966" y="91" width="3" height="1" fill="#202020" />
<rect x="966" y="95" width="3" height="1" fill="#202020" />
<rect x="966" y="99" width="3" height="1" fill="#202020" />
<rect x="966" y="103" width="3" height="1" fill="#202020" />
<rect x="966" y="107" width="3" height="1" fill="#202020" />
<rect x="966" y="111" width="3" height="1" fill="#202020" />
<rect x="966" y="115" width="3" height="1" fill="#202020" />
<rect x="966" y="119" width="3" height="1" fill="#202020" />
<rect x="966" y="123" width="3" height="1" fill="#202020" />
<rect x="966" y="127" width="3" height="1" fill="#202020" />
<rect x="966" y="91" width="5" height="1" fill="#202020" />
<path d="M960 86.5 L965.5 91.5 L960 96.5 Z" fill="#ff0000"/>
<path d="M954.2 79.4 L957.6 86.6 L955.2 86.6 L955.2 93.7 L957.6 93.7 L954.2 101 L950.8 93.7 L953.2 93.7 L953.2 86.6 L950.8 86.6 Z" fill="#f49494"/>
<text x="970" y="205" font-family="Liberation Sans" font-size="9" fill="#f0f000" text-anchor="start" font-weight="bold" >A</text>
<rect x="962" y="208" width="11" height="14" fill="#000" />
<rect x="963" y="209" width="10" height="12" fill="#c8c8c8" />
<rect x="965" y="210" width="1" height="10" fill="#404040" />
<rect x="967" y="210" width="1" height="10" fill="#404040" />
<rect x="969" y="210" width="1" height="10" fill="#404040" />
<rect x="971" y="210" width="1" height="10" fill="#404040" />
<rect x="948" y="223" width="25" height="1" fill="#000" />
<rect x="948" y="224" width="25" height="1" fill="#e0e0e0" />
<text x="962" y="243" font-family="Liberation Sans" font-size="12" fill="#e07818" text-anchor="start" font-weight="bold" >Ho</text>
<rect x="948" y="251" width="25" height="1" fill="#000" />
<rect x="948" y="252" width="25" height="1" fill="#e0e0e0" />
<path d="M961 274 L968 268 L968 275" stroke="#e07818" fill="none" stroke-width="1"/>
<rect x="955" y="277" width="18" height="14" fill="#000" />
<rect x="956" y="278" width="17" height="12" fill="#c8c8c8" />
<rect x="958" y="280" width="1" height="8" fill="#404040" />
<rect x="960" y="280" width="1" height="8" fill="#404040" />
<rect x="962" y="280" width="1" height="8" fill="#404040" />
<rect x="964" y="280" width="1" height="8" fill="#404040" />
<rect x="966" y="280" width="1" height="8" fill="#404040" />
<rect x="968" y="280" width="1" height="8" fill="#404040" />
<rect x="970" y="280" width="1" height="8" fill="#404040" />
<rect x="954" y="305" width="19" height="40" fill="#e0e0e0" />
<rect x="955" y="306" width="18" height="38" fill="#000" />
<rect x="956" y="307" width="17" height="36" fill="#a4a4a4" />
<rect x="957" y="313" width="16" height="24" fill="#b0b0b0" />
<rect x="957" y="313" width="11" height="24" fill="#6e6e6e" />
<text x="965" y="328" font-family="Liberation Sans" font-size="10" fill="#000" text-anchor="start" font-weight="normal" >21</text>
<path d="M950 434 L950 392 A42 42 0 0 1 992 350 L992 434 Z" fill="#f8f8f8" stroke="#8a4040" stroke-width="1"/>
<circle cx="992" cy="390" r="27" fill="#a8a8a8"/>
<circle cx="990" cy="388" r="23" fill="#c4c4c4"/>
<text x="967" y="363" font-family="Liberation Sans" font-size="7.6" fill="#202020" text-anchor="start" font-weight="normal" stroke="#202020" stroke-width="0.2">2</text>
<text x="960" y="371" font-family="Liberation Sans" font-size="7.6" fill="#202020" text-anchor="start" font-weight="normal" stroke="#202020" stroke-width="0.2">5</text>
<text x="953" y="381" font-family="Liberation Sans" font-size="7.6" fill="#202020" text-anchor="start" font-weight="normal" stroke="#202020" stroke-width="0.2">10</text>
<text x="952" y="391" font-family="Liberation Sans" font-size="7.6" fill="#202020" text-anchor="start" font-weight="normal" stroke="#202020" stroke-width="0.2">20</text>
<text x="952" y="403" font-family="Liberation Sans" font-size="7.6" fill="#202020" text-anchor="start" font-weight="normal" stroke="#202020" stroke-width="0.2">50</text>
<text x="952" y="413" font-family="Liberation Sans" font-size="7.6" fill="#202020" text-anchor="start" font-weight="normal" stroke="#202020" stroke-width="0.2">100</text>
<text x="960.3" y="422" font-family="Liberation Sans" font-size="7.6" fill="#202020" text-anchor="start" font-weight="normal" stroke="#202020" stroke-width="0.2">200</text>
<text x="955.5" y="429.5" font-family="Liberation Sans" font-size="7.6" fill="#202020" text-anchor="start" font-weight="normal" stroke="#202020" stroke-width="0.2">ms</text>
<line x1="972" y1="366" x2="974" y2="364" stroke="#202020"/>
<line x1="966" y1="373" x2="969" y2="371" stroke="#202020"/>
<line x1="962" y1="382" x2="965" y2="383" stroke="#202020"/>
<line x1="962" y1="389" x2="965" y2="389" stroke="#202020"/>
<line x1="961.5" y1="397.5" x2="965.5" y2="397.5" stroke="#202020"/>
<line x1="965" y1="406.5" x2="969" y2="405" stroke="#202020"/>
<line x1="970" y1="415" x2="972" y2="413" stroke="#202020"/>
<rect x="540" y="436" width="433" height="1" fill="#000" />
<rect x="537" y="437" width="436" height="2" fill="#0a50ec" />
<rect x="537" y="439" width="436" height="1" fill="#0020a8" />
</g>
<defs><filter id="sh" x="-20%" y="-20%" width="140%" height="140%"><feGaussianBlur in="SourceAlpha" stdDeviation="0.8"/><feOffset dx="1" dy="1" result="b"/><feFlood flood-color="#000" flood-opacity="0.35"/><feComposite in2="b" operator="in"/><feMerge><feMergeNode/><feMergeNode in="SourceGraphic"/></feMerge></filter></defs>
<g filter="url(#sh)">
<path d="M825.6 519 A17.7 16.5 0 1 0 856.5 506.5 C852.5 503 852 498 850.5 492 C849 498 845 501.5 838 503 A17.7 16.5 0 0 0 825.6 519 Z" fill="#f8f8f8"/>
</g>
<path d="M832.5 517.5 L846 507 C849 505 851 506 853 503" stroke="#a0a0a0" stroke-width="1.1" fill="none"/>
<path d="M853 518 L836 531" stroke="#a0a0a0" stroke-width="1.1" fill="none"/>
<circle cx="832.5" cy="518" r="2.2" fill="#fff" stroke="#a0a0a0" stroke-width="1.1"/>
<circle cx="853" cy="518" r="2.2" fill="#fff" stroke="#a0a0a0" stroke-width="1.1"/>
<g filter="url(#sh)">
<path d="M868 506 L868 516 M868 506 L878 505.5 L877.5 515 M868 511 L878 510.5 M868 515.5 L878 515 M873 502 L873 518 C873 520 875 520 880 519" stroke="#f8f8f8" stroke-width="2" fill="none" stroke-linecap="round" stroke-linejoin="round"/>
<path d="M885 504 L897 503.5 L891 509 M891 509 L891 518 C891 520 889 520 887 519 M884 511.5 L899 510" stroke="#f8f8f8" stroke-width="2" fill="none" stroke-linecap="round" stroke-linejoin="round"/>
<path d="M904 505 L906 509 M903 509 L918 508 M911 502 L909 510 C908 514 906 517 902 519 M910 512 L916 512 C914 516 911 518 908 518.5 M910 513 C912 516 915 518 918 519 M914 503 L916 505" stroke="#f8f8f8" stroke-width="2" fill="none" stroke-linecap="round" stroke-linejoin="round"/>
<path d="M921 507 L922 511 M925 505 L924 510 M923 502 L923 511 C922 515 921 517 920 519 M923 511 L926 514 M929 503 L934 503 M928 506 L936 505 M932 506 L932 509 M927 509 L937 508.5 M930 512 C930 516 928 518 926 519 M933 512 L933 518 L937 518" stroke="#f8f8f8" stroke-width="2" fill="none" stroke-linecap="round" stroke-linejoin="round"/>
<path d="M940 506 L953 505 M946 502 C945 510 943 515 939 519 M944 511 L951 510.5 C949 515 946 518 942 519.5 M945 512 C948 516 951 518 954 519" stroke="#f8f8f8" stroke-width="2" fill="none" stroke-linecap="round" stroke-linejoin="round"/>
<text x="866.5" y="532" font-family="Liberation Sans" font-size="10" fill="#f8f8f8" letter-spacing="1">www.elecfans.com</text>
</g>
<rect x="900" y="440" width="1" height="105" fill="#0000c8"/>
<path d="M502.5 387.5 L502.5 403.5 L506 400 L509 407 L512 405.7 L509 399 L514 399 Z" fill="#fff" stroke="#000" stroke-width="1" stroke-linejoin="miter"/>
</svg>
</body></html>
